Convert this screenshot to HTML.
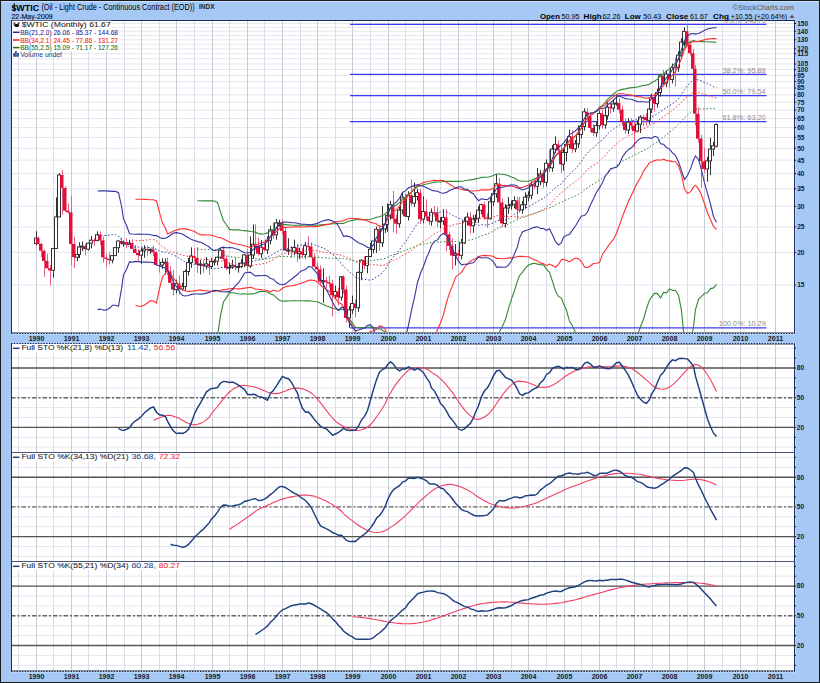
<!DOCTYPE html>
<html><head><meta charset="utf-8"><style>
html,body{margin:0;padding:0;background:#a5c8f5;}
svg{display:block;font-family:"Liberation Sans",sans-serif;}
</style></head><body>
<svg width="820" height="683" viewBox="0 0 820 683">
<rect x="0" y="0" width="820" height="683" fill="#a5c8f5"/>
<rect x="0.5" y="0.5" width="819" height="682" fill="none" stroke="#1a1a1a" stroke-width="1"/>
<line x1="1" y1="1.5" x2="819" y2="1.5" stroke="#c8e4ff" stroke-width="1"/>
<rect x="11.5" y="20.5" width="783" height="313" fill="#ffffff"/>
<rect x="11.5" y="343.5" width="783" height="109" fill="#ffffff"/>
<rect x="11.5" y="452.5" width="783" height="109" fill="#ffffff"/>
<rect x="11.5" y="561.5" width="783" height="110" fill="#ffffff"/>
<defs>
<clipPath id="c0"><rect x="12" y="21" width="782" height="312"/></clipPath>
<clipPath id="c1"><rect x="12" y="344" width="782" height="108"/></clipPath>
<clipPath id="c2"><rect x="12" y="453" width="782" height="108"/></clipPath>
<clipPath id="c3"><rect x="12" y="562" width="782" height="109"/></clipPath>
</defs>
<g clip-path="url(#c0)">
<line x1="11" y1="285.0" x2="794" y2="285.0" stroke="#e6e6ee" stroke-width="1"/>
<line x1="11" y1="252.4" x2="794" y2="252.4" stroke="#e6e6ee" stroke-width="1"/>
<line x1="11" y1="227.0" x2="794" y2="227.0" stroke="#e6e6ee" stroke-width="1"/>
<line x1="11" y1="206.3" x2="794" y2="206.3" stroke="#e6e6ee" stroke-width="1"/>
<line x1="11" y1="188.8" x2="794" y2="188.8" stroke="#e6e6ee" stroke-width="1"/>
<line x1="11" y1="173.6" x2="794" y2="173.6" stroke="#e6e6ee" stroke-width="1"/>
<line x1="11" y1="160.2" x2="794" y2="160.2" stroke="#e6e6ee" stroke-width="1"/>
<line x1="11" y1="148.3" x2="794" y2="148.3" stroke="#e6e6ee" stroke-width="1"/>
<line x1="11" y1="137.5" x2="794" y2="137.5" stroke="#e6e6ee" stroke-width="1"/>
<line x1="11" y1="127.6" x2="794" y2="127.6" stroke="#e6e6ee" stroke-width="1"/>
<line x1="11" y1="118.5" x2="794" y2="118.5" stroke="#e6e6ee" stroke-width="1"/>
<line x1="11" y1="110.1" x2="794" y2="110.1" stroke="#e6e6ee" stroke-width="1"/>
<line x1="11" y1="102.2" x2="794" y2="102.2" stroke="#e6e6ee" stroke-width="1"/>
<line x1="11" y1="94.9" x2="794" y2="94.9" stroke="#e6e6ee" stroke-width="1"/>
<line x1="11" y1="88.0" x2="794" y2="88.0" stroke="#e6e6ee" stroke-width="1"/>
<line x1="11" y1="81.5" x2="794" y2="81.5" stroke="#e6e6ee" stroke-width="1"/>
<line x1="11" y1="75.4" x2="794" y2="75.4" stroke="#e6e6ee" stroke-width="1"/>
<line x1="11" y1="69.6" x2="794" y2="69.6" stroke="#e6e6ee" stroke-width="1"/>
<line x1="11" y1="64.0" x2="794" y2="64.0" stroke="#e6e6ee" stroke-width="1"/>
<line x1="11" y1="58.7" x2="794" y2="58.7" stroke="#e6e6ee" stroke-width="1"/>
<line x1="11" y1="53.7" x2="794" y2="53.7" stroke="#e6e6ee" stroke-width="1"/>
<line x1="11" y1="48.8" x2="794" y2="48.8" stroke="#e6e6ee" stroke-width="1"/>
<line x1="11" y1="44.2" x2="794" y2="44.2" stroke="#e6e6ee" stroke-width="1"/>
<line x1="11" y1="39.8" x2="794" y2="39.8" stroke="#e6e6ee" stroke-width="1"/>
<line x1="11" y1="35.5" x2="794" y2="35.5" stroke="#e6e6ee" stroke-width="1"/>
<line x1="11" y1="31.3" x2="794" y2="31.3" stroke="#e6e6ee" stroke-width="1"/>
<line x1="11" y1="27.4" x2="794" y2="27.4" stroke="#e6e6ee" stroke-width="1"/>
<line x1="11" y1="23.5" x2="794" y2="23.5" stroke="#e6e6ee" stroke-width="1"/>
<line x1="18.5" y1="21" x2="18.5" y2="333" stroke="#dcdcea" stroke-width="1"/>
<line x1="36.5" y1="21" x2="36.5" y2="333" stroke="#c8ccd6" stroke-width="1"/>
<line x1="53.5" y1="21" x2="53.5" y2="333" stroke="#dcdcea" stroke-width="1"/>
<line x1="71.5" y1="21" x2="71.5" y2="333" stroke="#c8ccd6" stroke-width="1"/>
<line x1="88.5" y1="21" x2="88.5" y2="333" stroke="#dcdcea" stroke-width="1"/>
<line x1="106.5" y1="21" x2="106.5" y2="333" stroke="#c8ccd6" stroke-width="1"/>
<line x1="124.5" y1="21" x2="124.5" y2="333" stroke="#dcdcea" stroke-width="1"/>
<line x1="141.5" y1="21" x2="141.5" y2="333" stroke="#c8ccd6" stroke-width="1"/>
<line x1="159.5" y1="21" x2="159.5" y2="333" stroke="#dcdcea" stroke-width="1"/>
<line x1="176.5" y1="21" x2="176.5" y2="333" stroke="#c8ccd6" stroke-width="1"/>
<line x1="194.5" y1="21" x2="194.5" y2="333" stroke="#dcdcea" stroke-width="1"/>
<line x1="212.5" y1="21" x2="212.5" y2="333" stroke="#c8ccd6" stroke-width="1"/>
<line x1="229.5" y1="21" x2="229.5" y2="333" stroke="#dcdcea" stroke-width="1"/>
<line x1="247.5" y1="21" x2="247.5" y2="333" stroke="#c8ccd6" stroke-width="1"/>
<line x1="264.5" y1="21" x2="264.5" y2="333" stroke="#dcdcea" stroke-width="1"/>
<line x1="282.5" y1="21" x2="282.5" y2="333" stroke="#c8ccd6" stroke-width="1"/>
<line x1="300.5" y1="21" x2="300.5" y2="333" stroke="#dcdcea" stroke-width="1"/>
<line x1="317.5" y1="21" x2="317.5" y2="333" stroke="#c8ccd6" stroke-width="1"/>
<line x1="335.5" y1="21" x2="335.5" y2="333" stroke="#dcdcea" stroke-width="1"/>
<line x1="352.5" y1="21" x2="352.5" y2="333" stroke="#c8ccd6" stroke-width="1"/>
<line x1="370.5" y1="21" x2="370.5" y2="333" stroke="#dcdcea" stroke-width="1"/>
<line x1="388.5" y1="21" x2="388.5" y2="333" stroke="#c8ccd6" stroke-width="1"/>
<line x1="405.5" y1="21" x2="405.5" y2="333" stroke="#dcdcea" stroke-width="1"/>
<line x1="423.5" y1="21" x2="423.5" y2="333" stroke="#c8ccd6" stroke-width="1"/>
<line x1="440.5" y1="21" x2="440.5" y2="333" stroke="#dcdcea" stroke-width="1"/>
<line x1="458.5" y1="21" x2="458.5" y2="333" stroke="#c8ccd6" stroke-width="1"/>
<line x1="476.5" y1="21" x2="476.5" y2="333" stroke="#dcdcea" stroke-width="1"/>
<line x1="493.5" y1="21" x2="493.5" y2="333" stroke="#c8ccd6" stroke-width="1"/>
<line x1="511.5" y1="21" x2="511.5" y2="333" stroke="#dcdcea" stroke-width="1"/>
<line x1="528.5" y1="21" x2="528.5" y2="333" stroke="#c8ccd6" stroke-width="1"/>
<line x1="546.5" y1="21" x2="546.5" y2="333" stroke="#dcdcea" stroke-width="1"/>
<line x1="564.5" y1="21" x2="564.5" y2="333" stroke="#c8ccd6" stroke-width="1"/>
<line x1="581.5" y1="21" x2="581.5" y2="333" stroke="#dcdcea" stroke-width="1"/>
<line x1="599.5" y1="21" x2="599.5" y2="333" stroke="#c8ccd6" stroke-width="1"/>
<line x1="616.5" y1="21" x2="616.5" y2="333" stroke="#dcdcea" stroke-width="1"/>
<line x1="634.5" y1="21" x2="634.5" y2="333" stroke="#c8ccd6" stroke-width="1"/>
<line x1="652.5" y1="21" x2="652.5" y2="333" stroke="#dcdcea" stroke-width="1"/>
<line x1="669.5" y1="21" x2="669.5" y2="333" stroke="#c8ccd6" stroke-width="1"/>
<line x1="687.5" y1="21" x2="687.5" y2="333" stroke="#dcdcea" stroke-width="1"/>
<line x1="704.5" y1="21" x2="704.5" y2="333" stroke="#c8ccd6" stroke-width="1"/>
<line x1="722.5" y1="21" x2="722.5" y2="333" stroke="#dcdcea" stroke-width="1"/>
<line x1="740.5" y1="21" x2="740.5" y2="333" stroke="#c8ccd6" stroke-width="1"/>
<line x1="757.5" y1="21" x2="757.5" y2="333" stroke="#dcdcea" stroke-width="1"/>
<line x1="775.5" y1="21" x2="775.5" y2="333" stroke="#c8ccd6" stroke-width="1"/>
</g>
<g clip-path="url(#c1)">
<line x1="11" y1="447.2" x2="794" y2="447.2" stroke="#e6e6ee" stroke-width="1"/>
<line x1="11" y1="437.3" x2="794" y2="437.3" stroke="#e6e6ee" stroke-width="1"/>
<line x1="11" y1="427.4" x2="794" y2="427.4" stroke="#e6e6ee" stroke-width="1"/>
<line x1="11" y1="417.5" x2="794" y2="417.5" stroke="#e6e6ee" stroke-width="1"/>
<line x1="11" y1="407.6" x2="794" y2="407.6" stroke="#e6e6ee" stroke-width="1"/>
<line x1="11" y1="397.7" x2="794" y2="397.7" stroke="#e6e6ee" stroke-width="1"/>
<line x1="11" y1="387.8" x2="794" y2="387.8" stroke="#e6e6ee" stroke-width="1"/>
<line x1="11" y1="377.9" x2="794" y2="377.9" stroke="#e6e6ee" stroke-width="1"/>
<line x1="11" y1="368.0" x2="794" y2="368.0" stroke="#e6e6ee" stroke-width="1"/>
<line x1="11" y1="358.1" x2="794" y2="358.1" stroke="#e6e6ee" stroke-width="1"/>
<line x1="11" y1="348.2" x2="794" y2="348.2" stroke="#e6e6ee" stroke-width="1"/>
<line x1="18.5" y1="344" x2="18.5" y2="452" stroke="#dcdcea" stroke-width="1"/>
<line x1="36.5" y1="344" x2="36.5" y2="452" stroke="#c8ccd6" stroke-width="1"/>
<line x1="53.5" y1="344" x2="53.5" y2="452" stroke="#dcdcea" stroke-width="1"/>
<line x1="71.5" y1="344" x2="71.5" y2="452" stroke="#c8ccd6" stroke-width="1"/>
<line x1="88.5" y1="344" x2="88.5" y2="452" stroke="#dcdcea" stroke-width="1"/>
<line x1="106.5" y1="344" x2="106.5" y2="452" stroke="#c8ccd6" stroke-width="1"/>
<line x1="124.5" y1="344" x2="124.5" y2="452" stroke="#dcdcea" stroke-width="1"/>
<line x1="141.5" y1="344" x2="141.5" y2="452" stroke="#c8ccd6" stroke-width="1"/>
<line x1="159.5" y1="344" x2="159.5" y2="452" stroke="#dcdcea" stroke-width="1"/>
<line x1="176.5" y1="344" x2="176.5" y2="452" stroke="#c8ccd6" stroke-width="1"/>
<line x1="194.5" y1="344" x2="194.5" y2="452" stroke="#dcdcea" stroke-width="1"/>
<line x1="212.5" y1="344" x2="212.5" y2="452" stroke="#c8ccd6" stroke-width="1"/>
<line x1="229.5" y1="344" x2="229.5" y2="452" stroke="#dcdcea" stroke-width="1"/>
<line x1="247.5" y1="344" x2="247.5" y2="452" stroke="#c8ccd6" stroke-width="1"/>
<line x1="264.5" y1="344" x2="264.5" y2="452" stroke="#dcdcea" stroke-width="1"/>
<line x1="282.5" y1="344" x2="282.5" y2="452" stroke="#c8ccd6" stroke-width="1"/>
<line x1="300.5" y1="344" x2="300.5" y2="452" stroke="#dcdcea" stroke-width="1"/>
<line x1="317.5" y1="344" x2="317.5" y2="452" stroke="#c8ccd6" stroke-width="1"/>
<line x1="335.5" y1="344" x2="335.5" y2="452" stroke="#dcdcea" stroke-width="1"/>
<line x1="352.5" y1="344" x2="352.5" y2="452" stroke="#c8ccd6" stroke-width="1"/>
<line x1="370.5" y1="344" x2="370.5" y2="452" stroke="#dcdcea" stroke-width="1"/>
<line x1="388.5" y1="344" x2="388.5" y2="452" stroke="#c8ccd6" stroke-width="1"/>
<line x1="405.5" y1="344" x2="405.5" y2="452" stroke="#dcdcea" stroke-width="1"/>
<line x1="423.5" y1="344" x2="423.5" y2="452" stroke="#c8ccd6" stroke-width="1"/>
<line x1="440.5" y1="344" x2="440.5" y2="452" stroke="#dcdcea" stroke-width="1"/>
<line x1="458.5" y1="344" x2="458.5" y2="452" stroke="#c8ccd6" stroke-width="1"/>
<line x1="476.5" y1="344" x2="476.5" y2="452" stroke="#dcdcea" stroke-width="1"/>
<line x1="493.5" y1="344" x2="493.5" y2="452" stroke="#c8ccd6" stroke-width="1"/>
<line x1="511.5" y1="344" x2="511.5" y2="452" stroke="#dcdcea" stroke-width="1"/>
<line x1="528.5" y1="344" x2="528.5" y2="452" stroke="#c8ccd6" stroke-width="1"/>
<line x1="546.5" y1="344" x2="546.5" y2="452" stroke="#dcdcea" stroke-width="1"/>
<line x1="564.5" y1="344" x2="564.5" y2="452" stroke="#c8ccd6" stroke-width="1"/>
<line x1="581.5" y1="344" x2="581.5" y2="452" stroke="#dcdcea" stroke-width="1"/>
<line x1="599.5" y1="344" x2="599.5" y2="452" stroke="#c8ccd6" stroke-width="1"/>
<line x1="616.5" y1="344" x2="616.5" y2="452" stroke="#dcdcea" stroke-width="1"/>
<line x1="634.5" y1="344" x2="634.5" y2="452" stroke="#c8ccd6" stroke-width="1"/>
<line x1="652.5" y1="344" x2="652.5" y2="452" stroke="#dcdcea" stroke-width="1"/>
<line x1="669.5" y1="344" x2="669.5" y2="452" stroke="#c8ccd6" stroke-width="1"/>
<line x1="687.5" y1="344" x2="687.5" y2="452" stroke="#dcdcea" stroke-width="1"/>
<line x1="704.5" y1="344" x2="704.5" y2="452" stroke="#c8ccd6" stroke-width="1"/>
<line x1="722.5" y1="344" x2="722.5" y2="452" stroke="#dcdcea" stroke-width="1"/>
<line x1="740.5" y1="344" x2="740.5" y2="452" stroke="#c8ccd6" stroke-width="1"/>
<line x1="757.5" y1="344" x2="757.5" y2="452" stroke="#dcdcea" stroke-width="1"/>
<line x1="775.5" y1="344" x2="775.5" y2="452" stroke="#c8ccd6" stroke-width="1"/>
</g>
<g clip-path="url(#c2)">
<line x1="11" y1="556.4" x2="794" y2="556.4" stroke="#e6e6ee" stroke-width="1"/>
<line x1="11" y1="546.5" x2="794" y2="546.5" stroke="#e6e6ee" stroke-width="1"/>
<line x1="11" y1="536.6" x2="794" y2="536.6" stroke="#e6e6ee" stroke-width="1"/>
<line x1="11" y1="526.7" x2="794" y2="526.7" stroke="#e6e6ee" stroke-width="1"/>
<line x1="11" y1="516.8" x2="794" y2="516.8" stroke="#e6e6ee" stroke-width="1"/>
<line x1="11" y1="506.9" x2="794" y2="506.9" stroke="#e6e6ee" stroke-width="1"/>
<line x1="11" y1="497.0" x2="794" y2="497.0" stroke="#e6e6ee" stroke-width="1"/>
<line x1="11" y1="487.1" x2="794" y2="487.1" stroke="#e6e6ee" stroke-width="1"/>
<line x1="11" y1="477.2" x2="794" y2="477.2" stroke="#e6e6ee" stroke-width="1"/>
<line x1="11" y1="467.3" x2="794" y2="467.3" stroke="#e6e6ee" stroke-width="1"/>
<line x1="11" y1="457.4" x2="794" y2="457.4" stroke="#e6e6ee" stroke-width="1"/>
<line x1="18.5" y1="453" x2="18.5" y2="561" stroke="#dcdcea" stroke-width="1"/>
<line x1="36.5" y1="453" x2="36.5" y2="561" stroke="#c8ccd6" stroke-width="1"/>
<line x1="53.5" y1="453" x2="53.5" y2="561" stroke="#dcdcea" stroke-width="1"/>
<line x1="71.5" y1="453" x2="71.5" y2="561" stroke="#c8ccd6" stroke-width="1"/>
<line x1="88.5" y1="453" x2="88.5" y2="561" stroke="#dcdcea" stroke-width="1"/>
<line x1="106.5" y1="453" x2="106.5" y2="561" stroke="#c8ccd6" stroke-width="1"/>
<line x1="124.5" y1="453" x2="124.5" y2="561" stroke="#dcdcea" stroke-width="1"/>
<line x1="141.5" y1="453" x2="141.5" y2="561" stroke="#c8ccd6" stroke-width="1"/>
<line x1="159.5" y1="453" x2="159.5" y2="561" stroke="#dcdcea" stroke-width="1"/>
<line x1="176.5" y1="453" x2="176.5" y2="561" stroke="#c8ccd6" stroke-width="1"/>
<line x1="194.5" y1="453" x2="194.5" y2="561" stroke="#dcdcea" stroke-width="1"/>
<line x1="212.5" y1="453" x2="212.5" y2="561" stroke="#c8ccd6" stroke-width="1"/>
<line x1="229.5" y1="453" x2="229.5" y2="561" stroke="#dcdcea" stroke-width="1"/>
<line x1="247.5" y1="453" x2="247.5" y2="561" stroke="#c8ccd6" stroke-width="1"/>
<line x1="264.5" y1="453" x2="264.5" y2="561" stroke="#dcdcea" stroke-width="1"/>
<line x1="282.5" y1="453" x2="282.5" y2="561" stroke="#c8ccd6" stroke-width="1"/>
<line x1="300.5" y1="453" x2="300.5" y2="561" stroke="#dcdcea" stroke-width="1"/>
<line x1="317.5" y1="453" x2="317.5" y2="561" stroke="#c8ccd6" stroke-width="1"/>
<line x1="335.5" y1="453" x2="335.5" y2="561" stroke="#dcdcea" stroke-width="1"/>
<line x1="352.5" y1="453" x2="352.5" y2="561" stroke="#c8ccd6" stroke-width="1"/>
<line x1="370.5" y1="453" x2="370.5" y2="561" stroke="#dcdcea" stroke-width="1"/>
<line x1="388.5" y1="453" x2="388.5" y2="561" stroke="#c8ccd6" stroke-width="1"/>
<line x1="405.5" y1="453" x2="405.5" y2="561" stroke="#dcdcea" stroke-width="1"/>
<line x1="423.5" y1="453" x2="423.5" y2="561" stroke="#c8ccd6" stroke-width="1"/>
<line x1="440.5" y1="453" x2="440.5" y2="561" stroke="#dcdcea" stroke-width="1"/>
<line x1="458.5" y1="453" x2="458.5" y2="561" stroke="#c8ccd6" stroke-width="1"/>
<line x1="476.5" y1="453" x2="476.5" y2="561" stroke="#dcdcea" stroke-width="1"/>
<line x1="493.5" y1="453" x2="493.5" y2="561" stroke="#c8ccd6" stroke-width="1"/>
<line x1="511.5" y1="453" x2="511.5" y2="561" stroke="#dcdcea" stroke-width="1"/>
<line x1="528.5" y1="453" x2="528.5" y2="561" stroke="#c8ccd6" stroke-width="1"/>
<line x1="546.5" y1="453" x2="546.5" y2="561" stroke="#dcdcea" stroke-width="1"/>
<line x1="564.5" y1="453" x2="564.5" y2="561" stroke="#c8ccd6" stroke-width="1"/>
<line x1="581.5" y1="453" x2="581.5" y2="561" stroke="#dcdcea" stroke-width="1"/>
<line x1="599.5" y1="453" x2="599.5" y2="561" stroke="#c8ccd6" stroke-width="1"/>
<line x1="616.5" y1="453" x2="616.5" y2="561" stroke="#dcdcea" stroke-width="1"/>
<line x1="634.5" y1="453" x2="634.5" y2="561" stroke="#c8ccd6" stroke-width="1"/>
<line x1="652.5" y1="453" x2="652.5" y2="561" stroke="#dcdcea" stroke-width="1"/>
<line x1="669.5" y1="453" x2="669.5" y2="561" stroke="#c8ccd6" stroke-width="1"/>
<line x1="687.5" y1="453" x2="687.5" y2="561" stroke="#dcdcea" stroke-width="1"/>
<line x1="704.5" y1="453" x2="704.5" y2="561" stroke="#c8ccd6" stroke-width="1"/>
<line x1="722.5" y1="453" x2="722.5" y2="561" stroke="#dcdcea" stroke-width="1"/>
<line x1="740.5" y1="453" x2="740.5" y2="561" stroke="#c8ccd6" stroke-width="1"/>
<line x1="757.5" y1="453" x2="757.5" y2="561" stroke="#dcdcea" stroke-width="1"/>
<line x1="775.5" y1="453" x2="775.5" y2="561" stroke="#c8ccd6" stroke-width="1"/>
</g>
<g clip-path="url(#c3)">
<line x1="11" y1="665.3" x2="794" y2="665.3" stroke="#e6e6ee" stroke-width="1"/>
<line x1="11" y1="655.4" x2="794" y2="655.4" stroke="#e6e6ee" stroke-width="1"/>
<line x1="11" y1="645.5" x2="794" y2="645.5" stroke="#e6e6ee" stroke-width="1"/>
<line x1="11" y1="635.6" x2="794" y2="635.6" stroke="#e6e6ee" stroke-width="1"/>
<line x1="11" y1="625.7" x2="794" y2="625.7" stroke="#e6e6ee" stroke-width="1"/>
<line x1="11" y1="615.8" x2="794" y2="615.8" stroke="#e6e6ee" stroke-width="1"/>
<line x1="11" y1="605.9" x2="794" y2="605.9" stroke="#e6e6ee" stroke-width="1"/>
<line x1="11" y1="596.0" x2="794" y2="596.0" stroke="#e6e6ee" stroke-width="1"/>
<line x1="11" y1="586.1" x2="794" y2="586.1" stroke="#e6e6ee" stroke-width="1"/>
<line x1="11" y1="576.2" x2="794" y2="576.2" stroke="#e6e6ee" stroke-width="1"/>
<line x1="11" y1="566.3" x2="794" y2="566.3" stroke="#e6e6ee" stroke-width="1"/>
<line x1="18.5" y1="562" x2="18.5" y2="671" stroke="#dcdcea" stroke-width="1"/>
<line x1="36.5" y1="562" x2="36.5" y2="671" stroke="#c8ccd6" stroke-width="1"/>
<line x1="53.5" y1="562" x2="53.5" y2="671" stroke="#dcdcea" stroke-width="1"/>
<line x1="71.5" y1="562" x2="71.5" y2="671" stroke="#c8ccd6" stroke-width="1"/>
<line x1="88.5" y1="562" x2="88.5" y2="671" stroke="#dcdcea" stroke-width="1"/>
<line x1="106.5" y1="562" x2="106.5" y2="671" stroke="#c8ccd6" stroke-width="1"/>
<line x1="124.5" y1="562" x2="124.5" y2="671" stroke="#dcdcea" stroke-width="1"/>
<line x1="141.5" y1="562" x2="141.5" y2="671" stroke="#c8ccd6" stroke-width="1"/>
<line x1="159.5" y1="562" x2="159.5" y2="671" stroke="#dcdcea" stroke-width="1"/>
<line x1="176.5" y1="562" x2="176.5" y2="671" stroke="#c8ccd6" stroke-width="1"/>
<line x1="194.5" y1="562" x2="194.5" y2="671" stroke="#dcdcea" stroke-width="1"/>
<line x1="212.5" y1="562" x2="212.5" y2="671" stroke="#c8ccd6" stroke-width="1"/>
<line x1="229.5" y1="562" x2="229.5" y2="671" stroke="#dcdcea" stroke-width="1"/>
<line x1="247.5" y1="562" x2="247.5" y2="671" stroke="#c8ccd6" stroke-width="1"/>
<line x1="264.5" y1="562" x2="264.5" y2="671" stroke="#dcdcea" stroke-width="1"/>
<line x1="282.5" y1="562" x2="282.5" y2="671" stroke="#c8ccd6" stroke-width="1"/>
<line x1="300.5" y1="562" x2="300.5" y2="671" stroke="#dcdcea" stroke-width="1"/>
<line x1="317.5" y1="562" x2="317.5" y2="671" stroke="#c8ccd6" stroke-width="1"/>
<line x1="335.5" y1="562" x2="335.5" y2="671" stroke="#dcdcea" stroke-width="1"/>
<line x1="352.5" y1="562" x2="352.5" y2="671" stroke="#c8ccd6" stroke-width="1"/>
<line x1="370.5" y1="562" x2="370.5" y2="671" stroke="#dcdcea" stroke-width="1"/>
<line x1="388.5" y1="562" x2="388.5" y2="671" stroke="#c8ccd6" stroke-width="1"/>
<line x1="405.5" y1="562" x2="405.5" y2="671" stroke="#dcdcea" stroke-width="1"/>
<line x1="423.5" y1="562" x2="423.5" y2="671" stroke="#c8ccd6" stroke-width="1"/>
<line x1="440.5" y1="562" x2="440.5" y2="671" stroke="#dcdcea" stroke-width="1"/>
<line x1="458.5" y1="562" x2="458.5" y2="671" stroke="#c8ccd6" stroke-width="1"/>
<line x1="476.5" y1="562" x2="476.5" y2="671" stroke="#dcdcea" stroke-width="1"/>
<line x1="493.5" y1="562" x2="493.5" y2="671" stroke="#c8ccd6" stroke-width="1"/>
<line x1="511.5" y1="562" x2="511.5" y2="671" stroke="#dcdcea" stroke-width="1"/>
<line x1="528.5" y1="562" x2="528.5" y2="671" stroke="#c8ccd6" stroke-width="1"/>
<line x1="546.5" y1="562" x2="546.5" y2="671" stroke="#dcdcea" stroke-width="1"/>
<line x1="564.5" y1="562" x2="564.5" y2="671" stroke="#c8ccd6" stroke-width="1"/>
<line x1="581.5" y1="562" x2="581.5" y2="671" stroke="#dcdcea" stroke-width="1"/>
<line x1="599.5" y1="562" x2="599.5" y2="671" stroke="#c8ccd6" stroke-width="1"/>
<line x1="616.5" y1="562" x2="616.5" y2="671" stroke="#dcdcea" stroke-width="1"/>
<line x1="634.5" y1="562" x2="634.5" y2="671" stroke="#c8ccd6" stroke-width="1"/>
<line x1="652.5" y1="562" x2="652.5" y2="671" stroke="#dcdcea" stroke-width="1"/>
<line x1="669.5" y1="562" x2="669.5" y2="671" stroke="#c8ccd6" stroke-width="1"/>
<line x1="687.5" y1="562" x2="687.5" y2="671" stroke="#dcdcea" stroke-width="1"/>
<line x1="704.5" y1="562" x2="704.5" y2="671" stroke="#c8ccd6" stroke-width="1"/>
<line x1="722.5" y1="562" x2="722.5" y2="671" stroke="#dcdcea" stroke-width="1"/>
<line x1="740.5" y1="562" x2="740.5" y2="671" stroke="#c8ccd6" stroke-width="1"/>
<line x1="757.5" y1="562" x2="757.5" y2="671" stroke="#dcdcea" stroke-width="1"/>
<line x1="775.5" y1="562" x2="775.5" y2="671" stroke="#c8ccd6" stroke-width="1"/>
</g>
<g clip-path="url(#c0)">
<line x1="350" y1="24.4" x2="766.5" y2="24.4" stroke="#3b3bf0" stroke-width="1.3"/>
<line x1="350" y1="74.3" x2="766.5" y2="74.3" stroke="#3b3bf0" stroke-width="1.3"/>
<line x1="350" y1="95.6" x2="766.5" y2="95.6" stroke="#3b3bf0" stroke-width="1.3"/>
<line x1="350" y1="121.7" x2="766.5" y2="121.7" stroke="#3b3bf0" stroke-width="1.3"/>
<line x1="350" y1="327.8" x2="766.5" y2="327.8" stroke="#3b3bf0" stroke-width="1.3"/>
<line x1="36.50" y1="231.2" x2="36.50" y2="245.5" stroke="#333" stroke-width="1"/>
<rect x="34.50" y="238.1" width="3" height="5.5" fill="#fff" stroke="#333" stroke-width="1"/>
<line x1="38.50" y1="236.4" x2="38.50" y2="244.0" stroke="#e86080" stroke-width="1"/>
<rect x="36.00" y="238.1" width="3.5" height="5.9" fill="#e0103a"/>
<line x1="41.50" y1="242.6" x2="41.50" y2="257.4" stroke="#e86080" stroke-width="1"/>
<rect x="39.00" y="243.9" width="3.5" height="6.8" fill="#e0103a"/>
<line x1="44.50" y1="249.3" x2="44.50" y2="276.9" stroke="#e86080" stroke-width="1"/>
<rect x="42.00" y="250.8" width="3.5" height="10.2" fill="#e0103a"/>
<line x1="47.50" y1="253.6" x2="47.50" y2="268.3" stroke="#e86080" stroke-width="1"/>
<rect x="45.00" y="261.0" width="3.5" height="7.2" fill="#e0103a"/>
<line x1="50.50" y1="265.0" x2="50.50" y2="285.5" stroke="#e86080" stroke-width="1"/>
<rect x="48.00" y="268.2" width="3.5" height="2.2" fill="#e0103a"/>
<line x1="53.50" y1="247.9" x2="53.50" y2="277.4" stroke="#333" stroke-width="1"/>
<rect x="51.50" y="248.5" width="3" height="21.8" fill="#fff" stroke="#333" stroke-width="1"/>
<line x1="56.50" y1="197.4" x2="56.50" y2="248.5" stroke="#333" stroke-width="1"/>
<rect x="54.50" y="216.9" width="3" height="31.6" fill="#fff" stroke="#333" stroke-width="1"/>
<line x1="59.50" y1="173.2" x2="59.50" y2="216.9" stroke="#333" stroke-width="1"/>
<rect x="57.50" y="175.0" width="3" height="41.9" fill="#fff" stroke="#333" stroke-width="1"/>
<line x1="62.50" y1="170.1" x2="62.50" y2="214.9" stroke="#e86080" stroke-width="1"/>
<rect x="60.00" y="175.0" width="3.5" height="13.0" fill="#e0103a"/>
<line x1="65.50" y1="186.0" x2="65.50" y2="211.9" stroke="#e86080" stroke-width="1"/>
<rect x="63.00" y="188.0" width="3.5" height="22.7" fill="#e0103a"/>
<line x1="68.50" y1="203.2" x2="68.50" y2="213.7" stroke="#e86080" stroke-width="1"/>
<rect x="66.00" y="210.7" width="3.5" height="1.6" fill="#e0103a"/>
<line x1="71.50" y1="195.6" x2="71.50" y2="265.3" stroke="#e86080" stroke-width="1"/>
<rect x="69.00" y="212.4" width="3.5" height="31.6" fill="#e0103a"/>
<line x1="74.50" y1="236.6" x2="74.50" y2="268.2" stroke="#e86080" stroke-width="1"/>
<rect x="72.00" y="243.9" width="3.5" height="13.3" fill="#e0103a"/>
<line x1="77.50" y1="247.7" x2="77.50" y2="261.2" stroke="#333" stroke-width="1"/>
<rect x="75.50" y="254.5" width="3" height="2.8" fill="#fff" stroke="#333" stroke-width="1"/>
<line x1="79.50" y1="242.2" x2="79.50" y2="258.1" stroke="#333" stroke-width="1"/>
<rect x="77.50" y="247.0" width="3" height="7.4" fill="#fff" stroke="#333" stroke-width="1"/>
<line x1="82.50" y1="241.4" x2="82.50" y2="251.1" stroke="#333" stroke-width="1"/>
<rect x="80.50" y="246.1" width="3" height="1.0" fill="#fff" stroke="#333" stroke-width="1"/>
<line x1="85.50" y1="244.0" x2="85.50" y2="255.4" stroke="#e86080" stroke-width="1"/>
<rect x="83.00" y="246.1" width="3.5" height="3.1" fill="#e0103a"/>
<line x1="88.50" y1="243.1" x2="88.50" y2="250.6" stroke="#333" stroke-width="1"/>
<rect x="86.50" y="243.2" width="3" height="6.0" fill="#fff" stroke="#333" stroke-width="1"/>
<line x1="91.50" y1="236.1" x2="91.50" y2="248.3" stroke="#333" stroke-width="1"/>
<rect x="89.50" y="240.2" width="3" height="3.0" fill="#fff" stroke="#333" stroke-width="1"/>
<line x1="94.50" y1="238.3" x2="94.50" y2="245.8" stroke="#e86080" stroke-width="1"/>
<rect x="92.00" y="240.2" width="3.5" height="1.0" fill="#e0103a"/>
<line x1="97.50" y1="231.3" x2="97.50" y2="241.4" stroke="#333" stroke-width="1"/>
<rect x="95.50" y="234.7" width="3" height="5.7" fill="#fff" stroke="#333" stroke-width="1"/>
<line x1="100.50" y1="231.3" x2="100.50" y2="245.3" stroke="#e86080" stroke-width="1"/>
<rect x="98.00" y="234.7" width="3.5" height="5.8" fill="#e0103a"/>
<line x1="103.50" y1="236.5" x2="103.50" y2="262.9" stroke="#e86080" stroke-width="1"/>
<rect x="101.00" y="240.4" width="3.5" height="17.0" fill="#e0103a"/>
<line x1="106.50" y1="253.7" x2="106.50" y2="266.8" stroke="#e86080" stroke-width="1"/>
<rect x="104.00" y="257.5" width="3.5" height="1.3" fill="#e0103a"/>
<line x1="109.50" y1="252.3" x2="109.50" y2="264.6" stroke="#e86080" stroke-width="1"/>
<rect x="107.00" y="258.8" width="3.5" height="1.3" fill="#e0103a"/>
<line x1="112.50" y1="255.0" x2="112.50" y2="263.3" stroke="#333" stroke-width="1"/>
<rect x="110.50" y="255.6" width="3" height="4.5" fill="#fff" stroke="#333" stroke-width="1"/>
<line x1="115.50" y1="247.5" x2="115.50" y2="255.6" stroke="#333" stroke-width="1"/>
<rect x="113.50" y="247.6" width="3" height="8.0" fill="#fff" stroke="#333" stroke-width="1"/>
<line x1="118.50" y1="240.5" x2="118.50" y2="252.8" stroke="#333" stroke-width="1"/>
<rect x="116.50" y="241.0" width="3" height="6.7" fill="#fff" stroke="#333" stroke-width="1"/>
<line x1="121.50" y1="237.4" x2="121.50" y2="244.4" stroke="#e86080" stroke-width="1"/>
<rect x="119.00" y="241.0" width="3.5" height="2.7" fill="#e0103a"/>
<line x1="123.50" y1="240.5" x2="123.50" y2="246.6" stroke="#333" stroke-width="1"/>
<rect x="121.50" y="242.2" width="3" height="1.4" fill="#fff" stroke="#333" stroke-width="1"/>
<line x1="126.50" y1="238.3" x2="126.50" y2="248.4" stroke="#e86080" stroke-width="1"/>
<rect x="124.00" y="242.2" width="3.5" height="2.0" fill="#e0103a"/>
<line x1="129.50" y1="239.8" x2="129.50" y2="244.9" stroke="#333" stroke-width="1"/>
<rect x="127.50" y="243.0" width="3" height="1.2" fill="#fff" stroke="#333" stroke-width="1"/>
<line x1="132.50" y1="239.3" x2="132.50" y2="249.0" stroke="#e86080" stroke-width="1"/>
<rect x="130.00" y="243.0" width="3.5" height="5.9" fill="#e0103a"/>
<line x1="135.50" y1="245.0" x2="135.50" y2="253.1" stroke="#e86080" stroke-width="1"/>
<rect x="133.00" y="248.9" width="3.5" height="4.1" fill="#e0103a"/>
<line x1="138.50" y1="249.1" x2="138.50" y2="260.8" stroke="#e86080" stroke-width="1"/>
<rect x="136.00" y="253.0" width="3.5" height="2.2" fill="#e0103a"/>
<line x1="141.50" y1="248.0" x2="141.50" y2="263.9" stroke="#333" stroke-width="1"/>
<rect x="139.50" y="250.9" width="3" height="4.3" fill="#fff" stroke="#333" stroke-width="1"/>
<line x1="144.50" y1="245.1" x2="144.50" y2="257.7" stroke="#333" stroke-width="1"/>
<rect x="142.50" y="249.0" width="3" height="1.9" fill="#fff" stroke="#333" stroke-width="1"/>
<line x1="147.50" y1="245.9" x2="147.50" y2="255.7" stroke="#e86080" stroke-width="1"/>
<rect x="145.00" y="249.0" width="3.5" height="1.0" fill="#e0103a"/>
<line x1="150.50" y1="248.5" x2="150.50" y2="253.9" stroke="#333" stroke-width="1"/>
<rect x="148.50" y="249.4" width="3" height="1.0" fill="#fff" stroke="#333" stroke-width="1"/>
<line x1="153.50" y1="245.5" x2="153.50" y2="256.3" stroke="#e86080" stroke-width="1"/>
<rect x="151.00" y="249.4" width="3.5" height="2.9" fill="#e0103a"/>
<line x1="156.50" y1="251.0" x2="156.50" y2="265.0" stroke="#e86080" stroke-width="1"/>
<rect x="154.00" y="252.2" width="3.5" height="12.7" fill="#e0103a"/>
<line x1="159.50" y1="258.7" x2="159.50" y2="272.6" stroke="#e86080" stroke-width="1"/>
<rect x="157.00" y="265.0" width="3.5" height="1.0" fill="#e0103a"/>
<line x1="162.50" y1="258.2" x2="162.50" y2="269.0" stroke="#333" stroke-width="1"/>
<rect x="160.50" y="262.4" width="3" height="2.6" fill="#fff" stroke="#333" stroke-width="1"/>
<line x1="165.50" y1="258.3" x2="165.50" y2="274.6" stroke="#333" stroke-width="1"/>
<rect x="163.50" y="262.2" width="3" height="1.0" fill="#fff" stroke="#333" stroke-width="1"/>
<line x1="167.50" y1="257.7" x2="167.50" y2="275.4" stroke="#e86080" stroke-width="1"/>
<rect x="165.00" y="262.2" width="3.5" height="9.2" fill="#e0103a"/>
<line x1="170.50" y1="265.9" x2="170.50" y2="283.3" stroke="#e86080" stroke-width="1"/>
<rect x="168.00" y="271.3" width="3.5" height="11.4" fill="#e0103a"/>
<line x1="173.50" y1="269.8" x2="173.50" y2="295.5" stroke="#e86080" stroke-width="1"/>
<rect x="171.00" y="282.8" width="3.5" height="6.8" fill="#e0103a"/>
<line x1="176.50" y1="279.7" x2="176.50" y2="293.6" stroke="#333" stroke-width="1"/>
<rect x="174.50" y="283.6" width="3" height="6.0" fill="#fff" stroke="#333" stroke-width="1"/>
<line x1="179.50" y1="275.5" x2="179.50" y2="294.4" stroke="#e86080" stroke-width="1"/>
<rect x="177.00" y="283.6" width="3.5" height="5.4" fill="#e0103a"/>
<line x1="182.50" y1="282.7" x2="182.50" y2="290.9" stroke="#333" stroke-width="1"/>
<rect x="180.50" y="286.6" width="3" height="2.4" fill="#fff" stroke="#333" stroke-width="1"/>
<line x1="185.50" y1="269.8" x2="185.50" y2="290.7" stroke="#333" stroke-width="1"/>
<rect x="183.50" y="271.5" width="3" height="15.1" fill="#fff" stroke="#333" stroke-width="1"/>
<line x1="188.50" y1="258.0" x2="188.50" y2="275.5" stroke="#333" stroke-width="1"/>
<rect x="186.50" y="262.4" width="3" height="9.1" fill="#fff" stroke="#333" stroke-width="1"/>
<line x1="191.50" y1="247.3" x2="191.50" y2="267.8" stroke="#333" stroke-width="1"/>
<rect x="189.50" y="256.0" width="3" height="6.4" fill="#fff" stroke="#333" stroke-width="1"/>
<line x1="194.50" y1="247.8" x2="194.50" y2="261.9" stroke="#e86080" stroke-width="1"/>
<rect x="192.00" y="256.0" width="3.5" height="1.8" fill="#e0103a"/>
<line x1="197.50" y1="247.3" x2="197.50" y2="272.9" stroke="#e86080" stroke-width="1"/>
<rect x="195.00" y="257.8" width="3.5" height="6.9" fill="#e0103a"/>
<line x1="200.50" y1="260.1" x2="200.50" y2="274.5" stroke="#333" stroke-width="1"/>
<rect x="198.50" y="264.0" width="3" height="1.0" fill="#fff" stroke="#333" stroke-width="1"/>
<line x1="203.50" y1="260.1" x2="203.50" y2="272.9" stroke="#e86080" stroke-width="1"/>
<rect x="201.00" y="264.0" width="3.5" height="2.0" fill="#e0103a"/>
<line x1="206.50" y1="257.0" x2="206.50" y2="269.3" stroke="#333" stroke-width="1"/>
<rect x="204.50" y="263.9" width="3" height="2.0" fill="#fff" stroke="#333" stroke-width="1"/>
<line x1="209.50" y1="260.0" x2="209.50" y2="275.0" stroke="#e86080" stroke-width="1"/>
<rect x="207.00" y="263.9" width="3.5" height="2.5" fill="#e0103a"/>
<line x1="211.50" y1="257.7" x2="211.50" y2="268.8" stroke="#333" stroke-width="1"/>
<rect x="209.50" y="261.6" width="3" height="4.9" fill="#fff" stroke="#333" stroke-width="1"/>
<line x1="214.50" y1="259.0" x2="214.50" y2="265.6" stroke="#333" stroke-width="1"/>
<rect x="212.50" y="261.2" width="3" height="1.0" fill="#fff" stroke="#333" stroke-width="1"/>
<line x1="217.50" y1="256.8" x2="217.50" y2="265.5" stroke="#333" stroke-width="1"/>
<rect x="215.50" y="257.2" width="3" height="4.0" fill="#fff" stroke="#333" stroke-width="1"/>
<line x1="220.50" y1="248.0" x2="220.50" y2="258.8" stroke="#333" stroke-width="1"/>
<rect x="218.50" y="250.2" width="3" height="7.0" fill="#fff" stroke="#333" stroke-width="1"/>
<line x1="223.50" y1="246.3" x2="223.50" y2="260.9" stroke="#e86080" stroke-width="1"/>
<rect x="221.00" y="250.2" width="3.5" height="8.6" fill="#e0103a"/>
<line x1="226.50" y1="255.7" x2="226.50" y2="270.1" stroke="#e86080" stroke-width="1"/>
<rect x="224.00" y="258.8" width="3.5" height="9.3" fill="#e0103a"/>
<line x1="229.50" y1="263.2" x2="229.50" y2="274.2" stroke="#333" stroke-width="1"/>
<rect x="227.50" y="267.1" width="3" height="1.0" fill="#fff" stroke="#333" stroke-width="1"/>
<line x1="232.50" y1="259.8" x2="232.50" y2="269.0" stroke="#333" stroke-width="1"/>
<rect x="230.50" y="265.3" width="3" height="1.8" fill="#fff" stroke="#333" stroke-width="1"/>
<line x1="235.50" y1="257.3" x2="235.50" y2="270.6" stroke="#e86080" stroke-width="1"/>
<rect x="233.00" y="265.3" width="3.5" height="1.9" fill="#e0103a"/>
<line x1="238.50" y1="262.7" x2="238.50" y2="272.7" stroke="#333" stroke-width="1"/>
<rect x="236.50" y="266.6" width="3" height="1.0" fill="#fff" stroke="#333" stroke-width="1"/>
<line x1="241.50" y1="259.3" x2="241.50" y2="268.0" stroke="#333" stroke-width="1"/>
<rect x="239.50" y="263.2" width="3" height="3.4" fill="#fff" stroke="#333" stroke-width="1"/>
<line x1="244.50" y1="253.7" x2="244.50" y2="267.2" stroke="#333" stroke-width="1"/>
<rect x="242.50" y="254.9" width="3" height="8.3" fill="#fff" stroke="#333" stroke-width="1"/>
<line x1="247.50" y1="249.1" x2="247.50" y2="271.1" stroke="#e86080" stroke-width="1"/>
<rect x="245.00" y="254.9" width="3.5" height="11.0" fill="#e0103a"/>
<line x1="250.50" y1="236.3" x2="250.50" y2="268.0" stroke="#333" stroke-width="1"/>
<rect x="248.50" y="255.0" width="3" height="11.0" fill="#fff" stroke="#333" stroke-width="1"/>
<line x1="253.50" y1="224.4" x2="253.50" y2="258.8" stroke="#333" stroke-width="1"/>
<rect x="251.50" y="244.3" width="3" height="10.7" fill="#fff" stroke="#333" stroke-width="1"/>
<line x1="255.50" y1="224.4" x2="255.50" y2="249.8" stroke="#e86080" stroke-width="1"/>
<rect x="253.00" y="244.3" width="3.5" height="1.4" fill="#e0103a"/>
<line x1="258.50" y1="237.6" x2="258.50" y2="255.4" stroke="#e86080" stroke-width="1"/>
<rect x="256.00" y="245.7" width="3.5" height="8.0" fill="#e0103a"/>
<line x1="261.50" y1="240.2" x2="261.50" y2="257.8" stroke="#333" stroke-width="1"/>
<rect x="259.50" y="247.2" width="3" height="6.5" fill="#fff" stroke="#333" stroke-width="1"/>
<line x1="264.50" y1="243.3" x2="264.50" y2="251.4" stroke="#e86080" stroke-width="1"/>
<rect x="262.00" y="247.2" width="3.5" height="2.7" fill="#e0103a"/>
<line x1="267.50" y1="236.3" x2="267.50" y2="254.0" stroke="#333" stroke-width="1"/>
<rect x="265.50" y="240.2" width="3" height="9.7" fill="#fff" stroke="#333" stroke-width="1"/>
<line x1="270.50" y1="225.7" x2="270.50" y2="244.3" stroke="#333" stroke-width="1"/>
<rect x="268.50" y="229.9" width="3" height="10.4" fill="#fff" stroke="#333" stroke-width="1"/>
<line x1="273.50" y1="222.4" x2="273.50" y2="238.9" stroke="#e86080" stroke-width="1"/>
<rect x="271.00" y="229.9" width="3.5" height="4.9" fill="#e0103a"/>
<line x1="276.50" y1="219.0" x2="276.50" y2="239.6" stroke="#333" stroke-width="1"/>
<rect x="274.50" y="222.9" width="3" height="11.9" fill="#fff" stroke="#333" stroke-width="1"/>
<line x1="279.50" y1="219.8" x2="279.50" y2="226.9" stroke="#333" stroke-width="1"/>
<rect x="277.50" y="222.9" width="3" height="1.0" fill="#fff" stroke="#333" stroke-width="1"/>
<line x1="282.50" y1="219.1" x2="282.50" y2="235.0" stroke="#e86080" stroke-width="1"/>
<rect x="280.00" y="222.9" width="3.5" height="8.0" fill="#e0103a"/>
<line x1="285.50" y1="227.0" x2="285.50" y2="250.8" stroke="#e86080" stroke-width="1"/>
<rect x="283.00" y="230.9" width="3.5" height="19.7" fill="#e0103a"/>
<line x1="288.50" y1="238.2" x2="288.50" y2="254.7" stroke="#333" stroke-width="1"/>
<rect x="286.50" y="250.0" width="3" height="1.0" fill="#fff" stroke="#333" stroke-width="1"/>
<line x1="291.50" y1="246.1" x2="291.50" y2="258.0" stroke="#e86080" stroke-width="1"/>
<rect x="289.00" y="250.0" width="3.5" height="1.1" fill="#e0103a"/>
<line x1="294.50" y1="239.6" x2="294.50" y2="255.2" stroke="#333" stroke-width="1"/>
<rect x="292.50" y="247.5" width="3" height="3.7" fill="#fff" stroke="#333" stroke-width="1"/>
<line x1="297.50" y1="243.6" x2="297.50" y2="262.1" stroke="#e86080" stroke-width="1"/>
<rect x="295.00" y="247.5" width="3.5" height="6.0" fill="#e0103a"/>
<line x1="299.50" y1="247.7" x2="299.50" y2="259.0" stroke="#333" stroke-width="1"/>
<rect x="297.50" y="251.6" width="3" height="1.9" fill="#fff" stroke="#333" stroke-width="1"/>
<line x1="302.50" y1="247.7" x2="302.50" y2="258.6" stroke="#e86080" stroke-width="1"/>
<rect x="300.00" y="251.6" width="3.5" height="3.0" fill="#e0103a"/>
<line x1="305.50" y1="241.9" x2="305.50" y2="258.6" stroke="#333" stroke-width="1"/>
<rect x="303.50" y="245.8" width="3" height="8.7" fill="#fff" stroke="#333" stroke-width="1"/>
<line x1="308.50" y1="236.0" x2="308.50" y2="250.4" stroke="#e86080" stroke-width="1"/>
<rect x="306.00" y="245.8" width="3.5" height="1.0" fill="#e0103a"/>
<line x1="311.50" y1="242.5" x2="311.50" y2="257.5" stroke="#e86080" stroke-width="1"/>
<rect x="309.00" y="246.4" width="3.5" height="10.9" fill="#e0103a"/>
<line x1="314.50" y1="253.4" x2="314.50" y2="267.3" stroke="#e86080" stroke-width="1"/>
<rect x="312.00" y="257.3" width="3.5" height="9.3" fill="#e0103a"/>
<line x1="317.50" y1="262.7" x2="317.50" y2="279.1" stroke="#e86080" stroke-width="1"/>
<rect x="315.00" y="266.6" width="3.5" height="2.8" fill="#e0103a"/>
<line x1="320.50" y1="265.5" x2="320.50" y2="285.8" stroke="#e86080" stroke-width="1"/>
<rect x="318.00" y="269.4" width="3.5" height="12.3" fill="#e0103a"/>
<line x1="323.50" y1="268.2" x2="323.50" y2="302.8" stroke="#333" stroke-width="1"/>
<rect x="321.50" y="280.5" width="3" height="1.2" fill="#fff" stroke="#333" stroke-width="1"/>
<line x1="326.50" y1="277.0" x2="326.50" y2="288.0" stroke="#e86080" stroke-width="1"/>
<rect x="324.00" y="280.5" width="3.5" height="1.6" fill="#e0103a"/>
<line x1="329.50" y1="275.9" x2="329.50" y2="287.6" stroke="#e86080" stroke-width="1"/>
<rect x="327.00" y="282.1" width="3.5" height="1.4" fill="#e0103a"/>
<line x1="332.50" y1="279.6" x2="332.50" y2="316.5" stroke="#e86080" stroke-width="1"/>
<rect x="330.00" y="283.5" width="3.5" height="11.6" fill="#e0103a"/>
<line x1="335.50" y1="285.7" x2="335.50" y2="299.0" stroke="#333" stroke-width="1"/>
<rect x="333.50" y="291.5" width="3" height="3.7" fill="#fff" stroke="#333" stroke-width="1"/>
<line x1="338.50" y1="287.6" x2="338.50" y2="305.5" stroke="#e86080" stroke-width="1"/>
<rect x="336.00" y="291.5" width="3.5" height="5.8" fill="#e0103a"/>
<line x1="341.50" y1="276.4" x2="341.50" y2="300.6" stroke="#333" stroke-width="1"/>
<rect x="339.50" y="276.7" width="3" height="20.5" fill="#fff" stroke="#333" stroke-width="1"/>
<line x1="343.50" y1="275.3" x2="343.50" y2="293.6" stroke="#e86080" stroke-width="1"/>
<rect x="341.00" y="276.7" width="3.5" height="12.8" fill="#e0103a"/>
<line x1="346.50" y1="285.6" x2="346.50" y2="322.5" stroke="#e86080" stroke-width="1"/>
<rect x="344.00" y="289.5" width="3.5" height="28.5" fill="#e0103a"/>
<line x1="349.50" y1="306.0" x2="349.50" y2="327.8" stroke="#333" stroke-width="1"/>
<rect x="347.50" y="309.9" width="3" height="8.1" fill="#fff" stroke="#333" stroke-width="1"/>
<line x1="352.50" y1="295.6" x2="352.50" y2="313.9" stroke="#333" stroke-width="1"/>
<rect x="350.50" y="303.5" width="3" height="6.4" fill="#fff" stroke="#333" stroke-width="1"/>
<line x1="355.50" y1="299.6" x2="355.50" y2="317.6" stroke="#e86080" stroke-width="1"/>
<rect x="353.00" y="303.5" width="3.5" height="4.4" fill="#e0103a"/>
<line x1="358.50" y1="271.5" x2="358.50" y2="311.9" stroke="#333" stroke-width="1"/>
<rect x="356.50" y="272.4" width="3" height="35.4" fill="#fff" stroke="#333" stroke-width="1"/>
<line x1="361.50" y1="259.4" x2="361.50" y2="280.3" stroke="#333" stroke-width="1"/>
<rect x="359.50" y="260.2" width="3" height="12.2" fill="#fff" stroke="#333" stroke-width="1"/>
<line x1="364.50" y1="256.3" x2="364.50" y2="269.4" stroke="#e86080" stroke-width="1"/>
<rect x="362.00" y="260.2" width="3.5" height="5.1" fill="#e0103a"/>
<line x1="367.50" y1="256.2" x2="367.50" y2="273.3" stroke="#333" stroke-width="1"/>
<rect x="365.50" y="256.5" width="3" height="8.9" fill="#fff" stroke="#333" stroke-width="1"/>
<line x1="370.50" y1="243.0" x2="370.50" y2="256.8" stroke="#333" stroke-width="1"/>
<rect x="368.50" y="249.4" width="3" height="7.1" fill="#fff" stroke="#333" stroke-width="1"/>
<line x1="373.50" y1="241.0" x2="373.50" y2="253.4" stroke="#333" stroke-width="1"/>
<rect x="371.50" y="241.0" width="3" height="8.4" fill="#fff" stroke="#333" stroke-width="1"/>
<line x1="376.50" y1="226.5" x2="376.50" y2="252.9" stroke="#333" stroke-width="1"/>
<rect x="374.50" y="229.3" width="3" height="11.7" fill="#fff" stroke="#333" stroke-width="1"/>
<line x1="379.50" y1="225.3" x2="379.50" y2="250.9" stroke="#e86080" stroke-width="1"/>
<rect x="377.00" y="229.3" width="3.5" height="13.6" fill="#e0103a"/>
<line x1="382.50" y1="206.1" x2="382.50" y2="246.9" stroke="#333" stroke-width="1"/>
<rect x="380.50" y="228.9" width="3" height="13.9" fill="#fff" stroke="#333" stroke-width="1"/>
<line x1="385.50" y1="220.4" x2="385.50" y2="232.9" stroke="#333" stroke-width="1"/>
<rect x="383.50" y="224.3" width="3" height="4.6" fill="#fff" stroke="#333" stroke-width="1"/>
<line x1="387.50" y1="203.4" x2="387.50" y2="231.8" stroke="#333" stroke-width="1"/>
<rect x="385.50" y="215.6" width="3" height="8.7" fill="#fff" stroke="#333" stroke-width="1"/>
<line x1="390.50" y1="200.8" x2="390.50" y2="219.7" stroke="#333" stroke-width="1"/>
<rect x="388.50" y="204.7" width="3" height="10.9" fill="#fff" stroke="#333" stroke-width="1"/>
<line x1="393.50" y1="190.9" x2="393.50" y2="232.4" stroke="#e86080" stroke-width="1"/>
<rect x="391.00" y="204.7" width="3.5" height="14.0" fill="#e0103a"/>
<line x1="396.50" y1="214.8" x2="396.50" y2="233.7" stroke="#e86080" stroke-width="1"/>
<rect x="394.00" y="218.7" width="3.5" height="5.0" fill="#e0103a"/>
<line x1="399.50" y1="206.2" x2="399.50" y2="227.7" stroke="#333" stroke-width="1"/>
<rect x="397.50" y="210.1" width="3" height="13.6" fill="#fff" stroke="#333" stroke-width="1"/>
<line x1="402.50" y1="192.9" x2="402.50" y2="214.2" stroke="#333" stroke-width="1"/>
<rect x="400.50" y="197.2" width="3" height="12.9" fill="#fff" stroke="#333" stroke-width="1"/>
<line x1="405.50" y1="193.3" x2="405.50" y2="216.9" stroke="#e86080" stroke-width="1"/>
<rect x="403.00" y="197.2" width="3.5" height="19.3" fill="#e0103a"/>
<line x1="408.50" y1="191.2" x2="408.50" y2="220.5" stroke="#333" stroke-width="1"/>
<rect x="406.50" y="195.1" width="3" height="21.4" fill="#fff" stroke="#333" stroke-width="1"/>
<line x1="411.50" y1="179.5" x2="411.50" y2="205.9" stroke="#e86080" stroke-width="1"/>
<rect x="409.00" y="195.1" width="3.5" height="8.1" fill="#e0103a"/>
<line x1="414.50" y1="182.4" x2="414.50" y2="207.2" stroke="#333" stroke-width="1"/>
<rect x="412.50" y="196.5" width="3" height="6.7" fill="#fff" stroke="#333" stroke-width="1"/>
<line x1="417.50" y1="188.8" x2="417.50" y2="200.6" stroke="#333" stroke-width="1"/>
<rect x="415.50" y="192.7" width="3" height="3.8" fill="#fff" stroke="#333" stroke-width="1"/>
<line x1="420.50" y1="188.8" x2="420.50" y2="224.2" stroke="#e86080" stroke-width="1"/>
<rect x="418.00" y="192.7" width="3.5" height="26.4" fill="#e0103a"/>
<line x1="423.50" y1="196.4" x2="423.50" y2="223.2" stroke="#333" stroke-width="1"/>
<rect x="421.50" y="211.5" width="3" height="7.6" fill="#fff" stroke="#333" stroke-width="1"/>
<line x1="426.50" y1="199.3" x2="426.50" y2="220.7" stroke="#e86080" stroke-width="1"/>
<rect x="424.00" y="211.5" width="3.5" height="5.1" fill="#e0103a"/>
<line x1="429.50" y1="212.7" x2="429.50" y2="224.9" stroke="#e86080" stroke-width="1"/>
<rect x="427.00" y="216.6" width="3.5" height="4.7" fill="#e0103a"/>
<line x1="431.50" y1="208.4" x2="431.50" y2="225.6" stroke="#333" stroke-width="1"/>
<rect x="429.50" y="212.3" width="3" height="9.0" fill="#fff" stroke="#333" stroke-width="1"/>
<line x1="434.50" y1="205.9" x2="434.50" y2="216.7" stroke="#e86080" stroke-width="1"/>
<rect x="432.00" y="212.3" width="3.5" height="1.0" fill="#e0103a"/>
<line x1="437.50" y1="207.3" x2="437.50" y2="227.1" stroke="#e86080" stroke-width="1"/>
<rect x="435.00" y="212.6" width="3.5" height="8.8" fill="#e0103a"/>
<line x1="440.50" y1="217.1" x2="440.50" y2="228.6" stroke="#333" stroke-width="1"/>
<rect x="438.50" y="221.0" width="3" height="1.0" fill="#fff" stroke="#333" stroke-width="1"/>
<line x1="443.50" y1="209.2" x2="443.50" y2="225.1" stroke="#333" stroke-width="1"/>
<rect x="441.50" y="217.4" width="3" height="3.6" fill="#fff" stroke="#333" stroke-width="1"/>
<line x1="446.50" y1="209.2" x2="446.50" y2="250.9" stroke="#e86080" stroke-width="1"/>
<rect x="444.00" y="217.4" width="3.5" height="16.9" fill="#e0103a"/>
<line x1="449.50" y1="231.5" x2="449.50" y2="249.9" stroke="#e86080" stroke-width="1"/>
<rect x="447.00" y="234.4" width="3.5" height="11.5" fill="#e0103a"/>
<line x1="452.50" y1="238.4" x2="452.50" y2="269.7" stroke="#e86080" stroke-width="1"/>
<rect x="450.00" y="245.8" width="3.5" height="9.7" fill="#e0103a"/>
<line x1="455.50" y1="244.0" x2="455.50" y2="265.5" stroke="#333" stroke-width="1"/>
<rect x="453.50" y="253.3" width="3" height="2.3" fill="#fff" stroke="#333" stroke-width="1"/>
<line x1="458.50" y1="249.4" x2="458.50" y2="259.4" stroke="#e86080" stroke-width="1"/>
<rect x="456.00" y="253.3" width="3.5" height="2.1" fill="#e0103a"/>
<line x1="461.50" y1="239.0" x2="461.50" y2="259.4" stroke="#333" stroke-width="1"/>
<rect x="459.50" y="242.9" width="3" height="12.5" fill="#fff" stroke="#333" stroke-width="1"/>
<line x1="464.50" y1="217.3" x2="464.50" y2="244.0" stroke="#333" stroke-width="1"/>
<rect x="462.50" y="221.2" width="3" height="21.7" fill="#fff" stroke="#333" stroke-width="1"/>
<line x1="467.50" y1="212.7" x2="467.50" y2="225.3" stroke="#333" stroke-width="1"/>
<rect x="465.50" y="217.1" width="3" height="4.2" fill="#fff" stroke="#333" stroke-width="1"/>
<line x1="470.50" y1="212.0" x2="470.50" y2="233.5" stroke="#e86080" stroke-width="1"/>
<rect x="468.00" y="217.1" width="3.5" height="8.6" fill="#e0103a"/>
<line x1="473.50" y1="214.9" x2="473.50" y2="232.9" stroke="#333" stroke-width="1"/>
<rect x="471.50" y="218.9" width="3" height="6.8" fill="#fff" stroke="#333" stroke-width="1"/>
<line x1="475.50" y1="214.3" x2="475.50" y2="222.9" stroke="#333" stroke-width="1"/>
<rect x="473.50" y="218.2" width="3" height="1.0" fill="#fff" stroke="#333" stroke-width="1"/>
<line x1="478.50" y1="206.3" x2="478.50" y2="223.1" stroke="#333" stroke-width="1"/>
<rect x="476.50" y="210.2" width="3" height="8.0" fill="#fff" stroke="#333" stroke-width="1"/>
<line x1="481.50" y1="203.6" x2="481.50" y2="214.3" stroke="#333" stroke-width="1"/>
<rect x="479.50" y="204.6" width="3" height="5.6" fill="#fff" stroke="#333" stroke-width="1"/>
<line x1="484.50" y1="201.6" x2="484.50" y2="220.3" stroke="#e86080" stroke-width="1"/>
<rect x="482.00" y="204.6" width="3.5" height="12.7" fill="#e0103a"/>
<line x1="487.50" y1="213.4" x2="487.50" y2="227.9" stroke="#e86080" stroke-width="1"/>
<rect x="485.00" y="217.3" width="3.5" height="1.4" fill="#e0103a"/>
<line x1="490.50" y1="197.9" x2="490.50" y2="219.7" stroke="#333" stroke-width="1"/>
<rect x="488.50" y="201.8" width="3" height="16.9" fill="#fff" stroke="#333" stroke-width="1"/>
<line x1="493.50" y1="189.8" x2="493.50" y2="205.9" stroke="#333" stroke-width="1"/>
<rect x="491.50" y="193.7" width="3" height="8.1" fill="#fff" stroke="#333" stroke-width="1"/>
<line x1="496.50" y1="174.1" x2="496.50" y2="197.8" stroke="#333" stroke-width="1"/>
<rect x="494.50" y="183.7" width="3" height="10.0" fill="#fff" stroke="#333" stroke-width="1"/>
<line x1="499.50" y1="178.2" x2="499.50" y2="220.9" stroke="#e86080" stroke-width="1"/>
<rect x="497.00" y="183.7" width="3.5" height="18.7" fill="#e0103a"/>
<line x1="502.50" y1="198.5" x2="502.50" y2="226.7" stroke="#e86080" stroke-width="1"/>
<rect x="500.00" y="202.4" width="3.5" height="21.0" fill="#e0103a"/>
<line x1="505.50" y1="204.1" x2="505.50" y2="227.5" stroke="#333" stroke-width="1"/>
<rect x="503.50" y="208.0" width="3" height="15.5" fill="#fff" stroke="#333" stroke-width="1"/>
<line x1="508.50" y1="196.9" x2="508.50" y2="213.9" stroke="#333" stroke-width="1"/>
<rect x="506.50" y="205.6" width="3" height="2.4" fill="#fff" stroke="#333" stroke-width="1"/>
<line x1="511.50" y1="200.4" x2="511.50" y2="209.6" stroke="#333" stroke-width="1"/>
<rect x="509.50" y="204.3" width="3" height="1.3" fill="#fff" stroke="#333" stroke-width="1"/>
<line x1="514.50" y1="196.3" x2="514.50" y2="208.3" stroke="#333" stroke-width="1"/>
<rect x="512.50" y="200.5" width="3" height="3.8" fill="#fff" stroke="#333" stroke-width="1"/>
<line x1="517.50" y1="196.6" x2="517.50" y2="219.7" stroke="#e86080" stroke-width="1"/>
<rect x="515.00" y="200.5" width="3.5" height="8.9" fill="#e0103a"/>
<line x1="519.50" y1="196.9" x2="519.50" y2="212.7" stroke="#e86080" stroke-width="1"/>
<rect x="517.00" y="209.4" width="3.5" height="1.0" fill="#e0103a"/>
<line x1="522.50" y1="200.9" x2="522.50" y2="213.8" stroke="#333" stroke-width="1"/>
<rect x="520.50" y="204.8" width="3" height="5.0" fill="#fff" stroke="#333" stroke-width="1"/>
<line x1="525.50" y1="192.2" x2="525.50" y2="208.8" stroke="#333" stroke-width="1"/>
<rect x="523.50" y="197.1" width="3" height="7.6" fill="#fff" stroke="#333" stroke-width="1"/>
<line x1="528.50" y1="191.4" x2="528.50" y2="201.2" stroke="#333" stroke-width="1"/>
<rect x="526.50" y="195.3" width="3" height="1.8" fill="#fff" stroke="#333" stroke-width="1"/>
<line x1="531.50" y1="181.2" x2="531.50" y2="199.3" stroke="#333" stroke-width="1"/>
<rect x="529.50" y="185.1" width="3" height="10.2" fill="#fff" stroke="#333" stroke-width="1"/>
<line x1="534.50" y1="181.2" x2="534.50" y2="189.0" stroke="#e86080" stroke-width="1"/>
<rect x="532.00" y="185.1" width="3.5" height="1.3" fill="#e0103a"/>
<line x1="537.50" y1="168.0" x2="537.50" y2="194.3" stroke="#333" stroke-width="1"/>
<rect x="535.50" y="181.3" width="3" height="5.0" fill="#fff" stroke="#333" stroke-width="1"/>
<line x1="540.50" y1="170.1" x2="540.50" y2="185.4" stroke="#333" stroke-width="1"/>
<rect x="538.50" y="174.0" width="3" height="7.4" fill="#fff" stroke="#333" stroke-width="1"/>
<line x1="543.50" y1="170.1" x2="543.50" y2="187.7" stroke="#e86080" stroke-width="1"/>
<rect x="541.00" y="174.0" width="3.5" height="8.4" fill="#e0103a"/>
<line x1="546.50" y1="159.4" x2="546.50" y2="186.4" stroke="#333" stroke-width="1"/>
<rect x="544.50" y="163.3" width="3" height="19.0" fill="#fff" stroke="#333" stroke-width="1"/>
<line x1="549.50" y1="149.5" x2="549.50" y2="172.0" stroke="#e86080" stroke-width="1"/>
<rect x="547.00" y="163.3" width="3.5" height="4.4" fill="#e0103a"/>
<line x1="552.50" y1="145.2" x2="552.50" y2="171.8" stroke="#333" stroke-width="1"/>
<rect x="550.50" y="149.1" width="3" height="18.7" fill="#fff" stroke="#333" stroke-width="1"/>
<line x1="555.50" y1="136.4" x2="555.50" y2="153.1" stroke="#333" stroke-width="1"/>
<rect x="553.50" y="144.4" width="3" height="4.7" fill="#fff" stroke="#333" stroke-width="1"/>
<line x1="558.50" y1="140.4" x2="558.50" y2="154.3" stroke="#e86080" stroke-width="1"/>
<rect x="556.00" y="144.4" width="3.5" height="5.9" fill="#e0103a"/>
<line x1="561.50" y1="146.4" x2="561.50" y2="173.2" stroke="#e86080" stroke-width="1"/>
<rect x="559.00" y="150.3" width="3.5" height="14.0" fill="#e0103a"/>
<line x1="563.50" y1="148.5" x2="563.50" y2="170.6" stroke="#333" stroke-width="1"/>
<rect x="561.50" y="152.4" width="3" height="11.8" fill="#fff" stroke="#333" stroke-width="1"/>
<line x1="566.50" y1="140.5" x2="566.50" y2="161.4" stroke="#333" stroke-width="1"/>
<rect x="564.50" y="144.4" width="3" height="8.1" fill="#fff" stroke="#333" stroke-width="1"/>
<line x1="569.50" y1="129.8" x2="569.50" y2="148.4" stroke="#333" stroke-width="1"/>
<rect x="567.50" y="136.6" width="3" height="7.7" fill="#fff" stroke="#333" stroke-width="1"/>
<line x1="572.50" y1="130.4" x2="572.50" y2="153.0" stroke="#e86080" stroke-width="1"/>
<rect x="570.00" y="136.6" width="3.5" height="12.3" fill="#e0103a"/>
<line x1="575.50" y1="140.0" x2="575.50" y2="152.2" stroke="#333" stroke-width="1"/>
<rect x="573.50" y="143.9" width="3" height="5.0" fill="#fff" stroke="#333" stroke-width="1"/>
<line x1="578.50" y1="125.2" x2="578.50" y2="147.9" stroke="#333" stroke-width="1"/>
<rect x="576.50" y="134.4" width="3" height="9.5" fill="#fff" stroke="#333" stroke-width="1"/>
<line x1="581.50" y1="122.6" x2="581.50" y2="138.4" stroke="#333" stroke-width="1"/>
<rect x="579.50" y="126.5" width="3" height="7.9" fill="#fff" stroke="#333" stroke-width="1"/>
<line x1="584.50" y1="108.2" x2="584.50" y2="130.5" stroke="#333" stroke-width="1"/>
<rect x="582.50" y="111.8" width="3" height="14.7" fill="#fff" stroke="#333" stroke-width="1"/>
<line x1="587.50" y1="107.9" x2="587.50" y2="122.0" stroke="#e86080" stroke-width="1"/>
<rect x="585.00" y="111.8" width="3.5" height="4.5" fill="#e0103a"/>
<line x1="590.50" y1="112.4" x2="590.50" y2="132.1" stroke="#e86080" stroke-width="1"/>
<rect x="588.00" y="116.3" width="3.5" height="11.7" fill="#e0103a"/>
<line x1="593.50" y1="124.1" x2="593.50" y2="135.9" stroke="#e86080" stroke-width="1"/>
<rect x="591.00" y="128.0" width="3.5" height="4.7" fill="#e0103a"/>
<line x1="596.50" y1="121.7" x2="596.50" y2="136.8" stroke="#333" stroke-width="1"/>
<rect x="594.50" y="125.6" width="3" height="7.1" fill="#fff" stroke="#333" stroke-width="1"/>
<line x1="599.50" y1="110.7" x2="599.50" y2="129.7" stroke="#333" stroke-width="1"/>
<rect x="597.50" y="113.5" width="3" height="12.1" fill="#fff" stroke="#333" stroke-width="1"/>
<line x1="602.50" y1="109.6" x2="602.50" y2="128.7" stroke="#e86080" stroke-width="1"/>
<rect x="600.00" y="113.5" width="3.5" height="11.4" fill="#e0103a"/>
<line x1="605.50" y1="111.8" x2="605.50" y2="128.7" stroke="#333" stroke-width="1"/>
<rect x="603.50" y="115.7" width="3" height="9.3" fill="#fff" stroke="#333" stroke-width="1"/>
<line x1="607.50" y1="102.0" x2="607.50" y2="119.7" stroke="#333" stroke-width="1"/>
<rect x="605.50" y="107.1" width="3" height="8.6" fill="#fff" stroke="#333" stroke-width="1"/>
<line x1="610.50" y1="103.1" x2="610.50" y2="113.8" stroke="#e86080" stroke-width="1"/>
<rect x="608.00" y="107.1" width="3.5" height="1.0" fill="#e0103a"/>
<line x1="613.50" y1="100.0" x2="613.50" y2="111.8" stroke="#333" stroke-width="1"/>
<rect x="611.50" y="103.9" width="3" height="4.1" fill="#fff" stroke="#333" stroke-width="1"/>
<line x1="616.50" y1="95.4" x2="616.50" y2="105.6" stroke="#333" stroke-width="1"/>
<rect x="614.50" y="103.1" width="3" height="1.0" fill="#fff" stroke="#333" stroke-width="1"/>
<line x1="619.50" y1="98.1" x2="619.50" y2="113.7" stroke="#e86080" stroke-width="1"/>
<rect x="617.00" y="103.1" width="3.5" height="6.5" fill="#e0103a"/>
<line x1="622.50" y1="105.7" x2="622.50" y2="126.2" stroke="#e86080" stroke-width="1"/>
<rect x="620.00" y="109.6" width="3.5" height="12.6" fill="#e0103a"/>
<line x1="625.50" y1="118.3" x2="625.50" y2="133.7" stroke="#e86080" stroke-width="1"/>
<rect x="623.00" y="122.2" width="3.5" height="7.8" fill="#e0103a"/>
<line x1="628.50" y1="118.2" x2="628.50" y2="134.0" stroke="#333" stroke-width="1"/>
<rect x="626.50" y="122.1" width="3" height="7.9" fill="#fff" stroke="#333" stroke-width="1"/>
<line x1="631.50" y1="118.2" x2="631.50" y2="129.6" stroke="#e86080" stroke-width="1"/>
<rect x="629.00" y="122.1" width="3.5" height="3.5" fill="#e0103a"/>
<line x1="634.50" y1="121.7" x2="634.50" y2="148.5" stroke="#e86080" stroke-width="1"/>
<rect x="632.00" y="125.6" width="3.5" height="5.5" fill="#e0103a"/>
<line x1="637.50" y1="120.3" x2="637.50" y2="132.4" stroke="#333" stroke-width="1"/>
<rect x="635.50" y="124.2" width="3" height="6.9" fill="#fff" stroke="#333" stroke-width="1"/>
<line x1="640.50" y1="115.2" x2="640.50" y2="133.0" stroke="#333" stroke-width="1"/>
<rect x="638.50" y="117.0" width="3" height="7.3" fill="#fff" stroke="#333" stroke-width="1"/>
<line x1="643.50" y1="114.6" x2="643.50" y2="126.4" stroke="#e86080" stroke-width="1"/>
<rect x="641.00" y="117.0" width="3.5" height="1.0" fill="#e0103a"/>
<line x1="646.50" y1="113.3" x2="646.50" y2="125.8" stroke="#e86080" stroke-width="1"/>
<rect x="644.00" y="117.2" width="3.5" height="3.0" fill="#e0103a"/>
<line x1="649.50" y1="105.1" x2="649.50" y2="124.3" stroke="#333" stroke-width="1"/>
<rect x="647.50" y="109.0" width="3" height="11.3" fill="#fff" stroke="#333" stroke-width="1"/>
<line x1="651.50" y1="93.6" x2="651.50" y2="113.0" stroke="#333" stroke-width="1"/>
<rect x="649.50" y="97.5" width="3" height="11.5" fill="#fff" stroke="#333" stroke-width="1"/>
<line x1="654.50" y1="93.6" x2="654.50" y2="111.9" stroke="#e86080" stroke-width="1"/>
<rect x="652.00" y="97.5" width="3.5" height="6.2" fill="#e0103a"/>
<line x1="657.50" y1="88.7" x2="657.50" y2="107.7" stroke="#333" stroke-width="1"/>
<rect x="655.50" y="92.6" width="3" height="11.1" fill="#fff" stroke="#333" stroke-width="1"/>
<line x1="660.50" y1="74.0" x2="660.50" y2="96.6" stroke="#333" stroke-width="1"/>
<rect x="658.50" y="75.9" width="3" height="16.6" fill="#fff" stroke="#333" stroke-width="1"/>
<line x1="663.50" y1="70.0" x2="663.50" y2="85.9" stroke="#e86080" stroke-width="1"/>
<rect x="661.00" y="75.9" width="3.5" height="7.2" fill="#e0103a"/>
<line x1="666.50" y1="70.3" x2="666.50" y2="87.2" stroke="#333" stroke-width="1"/>
<rect x="664.50" y="74.2" width="3" height="8.9" fill="#fff" stroke="#333" stroke-width="1"/>
<line x1="669.50" y1="70.3" x2="669.50" y2="87.9" stroke="#e86080" stroke-width="1"/>
<rect x="667.00" y="74.2" width="3.5" height="5.1" fill="#e0103a"/>
<line x1="672.50" y1="63.6" x2="672.50" y2="83.4" stroke="#333" stroke-width="1"/>
<rect x="670.50" y="67.5" width="3" height="11.9" fill="#fff" stroke="#333" stroke-width="1"/>
<line x1="675.50" y1="57.6" x2="675.50" y2="86.5" stroke="#e86080" stroke-width="1"/>
<rect x="673.00" y="67.5" width="3.5" height="1.0" fill="#e0103a"/>
<line x1="678.50" y1="51.3" x2="678.50" y2="71.8" stroke="#333" stroke-width="1"/>
<rect x="676.50" y="55.2" width="3" height="12.6" fill="#fff" stroke="#333" stroke-width="1"/>
<line x1="681.50" y1="38.2" x2="681.50" y2="59.3" stroke="#333" stroke-width="1"/>
<rect x="679.50" y="42.1" width="3" height="13.1" fill="#fff" stroke="#333" stroke-width="1"/>
<line x1="684.50" y1="27.2" x2="684.50" y2="46.1" stroke="#333" stroke-width="1"/>
<rect x="682.50" y="31.3" width="3" height="10.8" fill="#fff" stroke="#333" stroke-width="1"/>
<line x1="687.50" y1="24.4" x2="687.50" y2="46.4" stroke="#e86080" stroke-width="1"/>
<rect x="685.00" y="31.3" width="3.5" height="13.7" fill="#e0103a"/>
<line x1="690.50" y1="41.1" x2="690.50" y2="55.6" stroke="#e86080" stroke-width="1"/>
<rect x="688.00" y="45.0" width="3.5" height="8.2" fill="#e0103a"/>
<line x1="693.50" y1="49.0" x2="693.50" y2="79.3" stroke="#e86080" stroke-width="1"/>
<rect x="691.00" y="53.2" width="3.5" height="15.6" fill="#e0103a"/>
<line x1="695.50" y1="64.9" x2="695.50" y2="125.6" stroke="#e86080" stroke-width="1"/>
<rect x="693.00" y="68.8" width="3.5" height="44.8" fill="#e0103a"/>
<line x1="698.50" y1="107.1" x2="698.50" y2="142.7" stroke="#e86080" stroke-width="1"/>
<rect x="696.00" y="113.7" width="3.5" height="25.0" fill="#e0103a"/>
<line x1="701.50" y1="134.7" x2="701.50" y2="187.7" stroke="#e86080" stroke-width="1"/>
<rect x="699.00" y="138.6" width="3.5" height="22.6" fill="#e0103a"/>
<line x1="704.50" y1="147.6" x2="704.50" y2="173.0" stroke="#e86080" stroke-width="1"/>
<rect x="702.00" y="161.3" width="3.5" height="7.7" fill="#e0103a"/>
<line x1="707.50" y1="156.9" x2="707.50" y2="181.8" stroke="#333" stroke-width="1"/>
<rect x="705.50" y="160.9" width="3" height="8.1" fill="#fff" stroke="#333" stroke-width="1"/>
<line x1="710.50" y1="137.7" x2="710.50" y2="175.2" stroke="#333" stroke-width="1"/>
<rect x="708.50" y="149.1" width="3" height="11.8" fill="#fff" stroke="#333" stroke-width="1"/>
<line x1="713.50" y1="141.9" x2="713.50" y2="156.1" stroke="#333" stroke-width="1"/>
<rect x="711.50" y="145.8" width="3" height="3.3" fill="#fff" stroke="#333" stroke-width="1"/>
<line x1="716.50" y1="123.4" x2="716.50" y2="147.3" stroke="#333" stroke-width="1"/>
<rect x="714.50" y="124.5" width="3" height="21.7" fill="#fff" stroke="#333" stroke-width="1"/>
<polyline points="197.5,200.7 200.5,200.8 203.5,200.9 206.5,200.9 209.5,200.9 211.5,200.9 214.5,201.0 217.5,202.4 220.5,212.2 223.5,220.7 226.5,224.8 229.5,229.4 232.5,229.9 235.5,229.9 238.5,229.9 241.5,230.3 244.5,230.6 247.5,230.9 250.5,231.5 253.5,231.8 255.5,232.2 258.5,233.6 261.5,234.1 264.5,233.8 267.5,232.9 270.5,230.8 273.5,229.6 276.5,227.1 279.5,225.2 282.5,224.3 285.5,224.6 288.5,224.9 291.5,225.2 294.5,225.2 297.5,225.2 299.5,225.1 302.5,225.2 305.5,225.0 308.5,224.9 311.5,225.1 314.5,225.2 317.5,225.2 320.5,224.9 323.5,224.6 326.5,224.4 329.5,224.1 332.5,223.7 335.5,223.7 338.5,223.2 341.5,223.5 343.5,223.4 346.5,222.0 349.5,221.0 352.5,220.4 355.5,219.7 358.5,219.7 361.5,219.7 364.5,219.7 367.5,219.6 370.5,219.3 373.5,218.6 376.5,217.2 379.5,216.8 382.5,215.6 385.5,214.0 387.5,211.5 390.5,207.8 393.5,206.1 396.5,204.9 399.5,202.6 402.5,198.9 405.5,197.6 408.5,194.2 411.5,192.0 414.5,189.4 417.5,186.6 420.5,185.8 423.5,184.8 426.5,184.0 429.5,183.5 431.5,182.8 434.5,182.1 437.5,182.0 440.5,182.0 443.5,181.5 446.5,181.4 449.5,181.3 452.5,181.4 455.5,181.4 458.5,181.4 461.5,181.3 464.5,180.8 467.5,180.2 470.5,179.9 473.5,179.4 475.5,178.9 478.5,178.2 481.5,177.4 484.5,177.2 487.5,177.2 490.5,176.5 493.5,175.6 496.5,174.0 499.5,174.0 502.5,174.3 505.5,174.7 508.5,175.8 511.5,177.0 514.5,178.0 517.5,180.0 519.5,180.8 522.5,181.1 525.5,181.3 528.5,181.2 531.5,180.1 534.5,178.9 537.5,177.1 540.5,174.9 543.5,173.5 546.5,169.8 549.5,167.1 552.5,161.9 555.5,156.5 558.5,152.9 561.5,151.1 563.5,148.4 566.5,144.8 569.5,140.6 572.5,138.3 575.5,135.6 578.5,132.2 581.5,128.0 584.5,122.1 587.5,117.7 590.5,115.1 593.5,113.0 596.5,110.5 599.5,107.1 602.5,105.1 605.5,102.4 607.5,99.3 610.5,96.7 613.5,94.0 616.5,91.6 619.5,90.1 622.5,89.4 625.5,88.9 628.5,88.1 631.5,87.6 634.5,87.4 637.5,87.0 640.5,86.2 643.5,85.4 646.5,85.1 649.5,84.3 651.5,82.5 654.5,81.3 657.5,79.1 660.5,75.7 663.5,73.8 666.5,70.9 669.5,68.9 672.5,65.8 675.5,63.0 678.5,59.2 681.5,53.8 684.5,47.3 687.5,43.7 690.5,41.5 693.5,40.5 695.5,41.0 698.5,41.5 701.5,41.6 704.5,41.8 707.5,41.8 710.5,42.0 713.5,42.1 716.5,42.2" fill="none" stroke="#338833" stroke-width="1.1"/>
<polyline points="197.5,335.0 200.5,336.0 203.5,337.1 206.5,337.3 209.5,337.1 211.5,336.4 214.5,337.1 217.5,336.0 220.5,315.7 223.5,302.0 226.5,297.6 229.5,292.6 232.5,292.8 235.5,293.3 238.5,293.8 241.5,294.0 244.5,293.8 247.5,294.2 250.5,293.9 253.5,293.6 255.5,293.2 258.5,291.9 261.5,291.4 264.5,291.5 267.5,292.0 270.5,293.9 273.5,294.9 276.5,297.9 279.5,300.2 282.5,301.3 285.5,301.1 288.5,301.0 291.5,300.8 294.5,300.8 297.5,300.8 299.5,300.8 302.5,300.8 305.5,300.9 308.5,300.9 311.5,301.0 314.5,301.5 317.5,301.8 320.5,303.2 323.5,304.6 326.5,306.1 329.5,307.1 332.5,308.5 335.5,308.7 338.5,310.3 341.5,309.0 343.5,309.4 346.5,314.6 349.5,319.2 352.5,323.1 355.5,327.4 358.5,327.8 361.5,327.7 364.5,327.7 367.5,327.5 370.5,327.1 373.5,327.3 376.5,328.7 379.5,328.8 382.5,330.2 385.5,332.1 387.5,334.9 390.5,340.5 393.5,342.0 396.5,342.4 399.5,345.1 402.5,351.6 405.5,352.9 408.5,358.8 411.5,362.3 414.5,368.2 417.5,374.9 420.5,374.6 423.5,375.6 426.5,375.6 429.5,375.7 431.5,376.9 434.5,377.9 437.5,378.0 440.5,378.1 443.5,378.6 446.5,377.6 449.5,377.2 452.5,377.7 455.5,378.2 458.5,378.4 461.5,377.7 464.5,376.4 467.5,376.1 470.5,375.2 473.5,373.5 475.5,370.5 478.5,367.6 481.5,363.3 484.5,357.9 487.5,352.3 490.5,347.6 493.5,342.2 496.5,339.3 499.5,331.6 502.5,326.3 505.5,319.3 508.5,308.7 511.5,299.1 514.5,290.5 517.5,280.9 519.5,275.7 522.5,272.1 525.5,268.0 528.5,265.0 531.5,263.9 534.5,263.2 537.5,264.1 540.5,264.7 543.5,264.9 546.5,269.2 549.5,272.3 552.5,281.4 555.5,291.0 558.5,296.4 561.5,298.4 563.5,303.8 566.5,310.3 569.5,321.3 572.5,326.0 575.5,332.5 578.5,343.4 581.5,355.8 584.5,383.2 587.5,404.5 590.5,411.4 593.5,415.4 596.5,423.4 599.5,440.2 602.5,441.0 605.5,450.8 607.5,462.3 610.5,460.9 613.5,455.8 616.5,447.5 619.5,426.9 622.5,403.7 625.5,387.4 628.5,375.1 631.5,360.0 634.5,346.7 637.5,335.0 640.5,326.7 643.5,319.2 646.5,308.6 649.5,299.9 651.5,297.2 654.5,293.1 657.5,293.6 660.5,298.0 663.5,292.4 666.5,292.8 669.5,289.0 672.5,290.5 675.5,290.3 678.5,295.2 681.5,310.7 684.5,341.1 687.5,347.8 690.5,341.7 693.5,326.9 695.5,309.5 698.5,299.3 701.5,296.4 704.5,293.3 707.5,292.7 710.5,288.6 713.5,287.9 716.5,284.4" fill="none" stroke="#338833" stroke-width="1.1"/>
<polyline points="197.5,249.1 200.5,249.4 203.5,249.7 206.5,249.7 209.5,249.7 211.5,249.6 214.5,249.8 217.5,250.6 220.5,252.6 223.5,254.3 226.5,255.5 229.5,256.6 232.5,257.0 235.5,257.2 238.5,257.4 241.5,257.7 244.5,257.9 247.5,258.2 250.5,258.4 253.5,258.5 255.5,258.6 258.5,259.0 261.5,259.2 264.5,259.0 267.5,258.7 270.5,258.0 273.5,257.6 276.5,257.1 279.5,256.7 282.5,256.4 285.5,256.6 288.5,256.7 291.5,256.8 294.5,256.8 297.5,256.8 299.5,256.7 302.5,256.8 305.5,256.7 308.5,256.7 311.5,256.8 314.5,257.1 317.5,257.2 320.5,257.4 323.5,257.7 326.5,258.0 329.5,258.2 332.5,258.4 335.5,258.4 338.5,258.6 341.5,258.4 343.5,258.5 346.5,259.1 349.5,259.8 352.5,260.5 355.5,261.3 358.5,261.4 361.5,261.3 364.5,261.3 367.5,261.2 370.5,260.9 373.5,260.4 376.5,259.8 379.5,259.5 382.5,259.0 385.5,258.3 387.5,257.2 390.5,255.8 393.5,254.9 396.5,254.0 399.5,252.8 402.5,251.3 405.5,250.5 408.5,249.0 411.5,247.9 414.5,246.7 417.5,245.5 420.5,244.8 423.5,244.1 426.5,243.4 429.5,243.0 431.5,242.6 434.5,242.2 437.5,242.1 440.5,242.1 443.5,241.8 446.5,241.5 449.5,241.4 452.5,241.5 455.5,241.6 458.5,241.6 461.5,241.5 464.5,240.9 467.5,240.3 470.5,239.9 473.5,239.2 475.5,238.3 478.5,237.3 481.5,235.9 484.5,234.9 487.5,233.9 490.5,232.5 493.5,230.8 496.5,228.9 499.5,227.4 502.5,226.6 505.5,225.4 508.5,223.8 511.5,222.4 514.5,220.9 517.5,219.6 519.5,218.6 522.5,217.7 525.5,216.6 528.5,215.6 531.5,214.4 534.5,213.4 537.5,212.5 540.5,211.2 543.5,210.3 546.5,209.0 549.5,208.0 552.5,206.6 555.5,204.9 558.5,203.3 561.5,202.4 563.5,201.3 566.5,199.7 569.5,198.3 572.5,197.1 575.5,195.9 578.5,194.5 581.5,192.4 584.5,190.0 587.5,187.7 590.5,185.7 593.5,184.1 596.5,182.3 599.5,180.0 602.5,178.1 605.5,176.0 607.5,173.4 610.5,170.9 613.5,168.2 616.5,165.5 619.5,163.1 622.5,161.2 625.5,159.7 628.5,158.1 631.5,156.5 634.5,155.1 637.5,153.6 640.5,152.0 643.5,150.5 646.5,149.0 649.5,147.2 651.5,145.2 654.5,143.6 657.5,141.9 660.5,139.4 663.5,137.0 666.5,134.6 669.5,132.3 672.5,129.8 675.5,127.4 678.5,124.5 681.5,121.3 684.5,117.8 687.5,114.9 690.5,112.4 693.5,110.5 695.5,109.5 698.5,109.0 701.5,108.9 704.5,108.8 707.5,108.7 710.5,108.5 713.5,108.5 716.5,108.2" fill="none" stroke="#338833" stroke-width="1" stroke-dasharray="1.5,2"/>
<polyline points="135.5,199.3 138.5,199.3 141.5,199.3 144.5,199.4 147.5,199.5 150.5,199.8 153.5,199.8 156.5,201.0 159.5,212.4 162.5,223.1 165.5,228.2 167.5,234.0 170.5,232.8 173.5,231.0 176.5,230.0 179.5,229.1 182.5,228.7 185.5,228.9 188.5,229.6 191.5,230.6 194.5,231.6 197.5,233.5 200.5,234.8 203.5,234.9 206.5,235.0 209.5,235.0 211.5,235.2 214.5,235.9 217.5,237.2 220.5,237.8 223.5,239.1 226.5,240.5 229.5,242.1 232.5,243.1 235.5,243.7 238.5,244.2 241.5,245.0 244.5,245.7 247.5,246.8 250.5,247.5 253.5,246.3 255.5,244.6 258.5,244.0 261.5,242.9 264.5,242.0 267.5,240.0 270.5,236.6 273.5,235.1 276.5,231.3 279.5,228.5 282.5,227.4 285.5,227.4 288.5,227.3 291.5,227.2 294.5,226.9 297.5,226.9 299.5,226.9 302.5,227.0 305.5,226.8 308.5,226.7 311.5,226.8 314.5,226.6 317.5,226.4 320.5,225.7 323.5,225.1 326.5,224.6 329.5,224.1 332.5,223.0 335.5,222.2 338.5,221.3 341.5,221.1 343.5,220.8 346.5,219.2 349.5,218.5 352.5,218.5 355.5,218.6 358.5,218.9 361.5,219.4 364.5,219.9 367.5,220.8 370.5,222.4 373.5,223.0 376.5,224.0 379.5,226.4 382.5,226.1 385.5,223.4 387.5,219.5 390.5,214.0 393.5,211.6 396.5,209.7 399.5,206.4 402.5,201.3 405.5,199.5 408.5,195.1 411.5,192.1 414.5,188.5 417.5,184.9 420.5,183.9 423.5,182.6 426.5,181.8 429.5,181.3 431.5,180.7 434.5,180.3 437.5,180.5 440.5,180.4 443.5,180.6 446.5,182.4 449.5,184.2 452.5,185.9 455.5,188.2 458.5,188.8 461.5,189.3 464.5,190.1 467.5,190.5 470.5,190.9 473.5,191.0 475.5,190.8 478.5,190.7 481.5,189.9 484.5,189.8 487.5,189.9 490.5,189.7 493.5,188.0 496.5,184.9 499.5,184.5 502.5,185.6 505.5,185.3 508.5,186.2 511.5,186.3 514.5,186.7 517.5,188.1 519.5,187.8 522.5,187.4 525.5,186.3 528.5,185.0 531.5,182.7 534.5,180.7 537.5,178.2 540.5,174.9 543.5,173.0 546.5,168.7 549.5,166.1 552.5,160.9 555.5,155.6 558.5,152.5 561.5,151.4 563.5,148.5 566.5,144.8 569.5,140.5 572.5,138.4 575.5,135.9 578.5,132.4 581.5,128.1 584.5,122.0 587.5,117.7 590.5,115.3 593.5,113.6 596.5,111.2 599.5,107.9 602.5,106.8 605.5,104.6 607.5,101.6 610.5,99.2 613.5,96.6 616.5,94.6 619.5,93.6 622.5,93.8 625.5,94.3 628.5,94.7 631.5,95.1 634.5,96.0 637.5,96.6 640.5,96.8 643.5,97.7 646.5,98.1 649.5,98.1 651.5,96.1 654.5,95.0 657.5,92.8 660.5,88.4 663.5,85.8 666.5,81.7 669.5,78.9 672.5,74.8 675.5,71.4 678.5,65.8 681.5,58.2 684.5,49.4 687.5,45.1 690.5,42.5 693.5,41.6 695.5,41.7 698.5,41.4 701.5,40.6 704.5,39.7 707.5,39.1 710.5,38.8 713.5,38.6 716.5,38.6" fill="none" stroke="#ff3030" stroke-width="1.1"/>
<polyline points="135.5,305.3 138.5,306.2 141.5,306.2 144.5,305.0 147.5,303.0 150.5,300.6 153.5,301.0 156.5,303.0 159.5,288.5 162.5,277.0 165.5,273.3 167.5,269.6 170.5,273.8 173.5,278.4 176.5,281.9 179.5,286.1 182.5,289.7 185.5,291.0 188.5,291.4 191.5,291.2 194.5,290.9 197.5,290.3 200.5,290.1 203.5,290.6 206.5,290.8 209.5,291.2 211.5,291.4 214.5,291.4 217.5,290.7 220.5,290.3 223.5,289.6 226.5,289.4 229.5,288.8 232.5,288.6 235.5,288.7 238.5,288.9 241.5,288.6 244.5,288.1 247.5,287.7 250.5,287.3 253.5,288.3 255.5,289.2 258.5,289.2 261.5,289.8 264.5,290.0 267.5,290.7 270.5,291.8 273.5,290.1 276.5,291.3 279.5,290.7 282.5,288.3 285.5,286.7 288.5,286.1 291.5,285.8 294.5,285.4 297.5,284.6 299.5,283.8 302.5,282.8 305.5,281.8 308.5,280.4 311.5,280.0 314.5,280.6 317.5,281.9 320.5,285.1 323.5,287.6 326.5,289.4 329.5,291.5 332.5,295.5 335.5,298.6 338.5,302.6 341.5,304.0 343.5,307.5 346.5,314.6 349.5,320.9 352.5,326.1 355.5,331.9 358.5,333.0 361.5,333.1 364.5,333.6 367.5,333.2 370.5,331.4 373.5,330.8 376.5,329.3 379.5,325.9 382.5,326.4 385.5,329.7 387.5,335.1 390.5,344.0 393.5,347.2 396.5,348.9 399.5,353.6 402.5,362.5 405.5,364.5 408.5,373.1 411.5,376.5 414.5,380.0 417.5,383.0 420.5,376.6 423.5,370.9 426.5,364.1 429.5,356.7 431.5,347.6 434.5,338.9 437.5,329.2 440.5,323.0 443.5,314.6 446.5,302.5 449.5,292.9 452.5,285.6 455.5,277.2 458.5,274.6 461.5,272.4 464.5,267.5 467.5,263.7 470.5,261.2 473.5,259.4 475.5,258.8 478.5,256.5 481.5,255.8 484.5,255.4 487.5,255.6 490.5,255.7 493.5,256.5 496.5,258.4 499.5,258.5 502.5,258.7 505.5,258.5 508.5,257.9 511.5,257.9 514.5,257.6 517.5,256.5 519.5,256.3 522.5,256.4 525.5,256.7 528.5,256.8 531.5,258.5 534.5,259.7 537.5,260.9 540.5,263.1 543.5,263.5 546.5,265.7 549.5,264.0 552.5,265.5 555.5,267.2 558.5,264.3 561.5,259.4 563.5,259.2 566.5,260.5 569.5,261.9 572.5,259.8 575.5,258.0 578.5,258.8 581.5,261.6 584.5,267.1 587.5,267.6 590.5,265.8 593.5,263.5 596.5,263.3 599.5,262.5 602.5,254.4 605.5,250.0 607.5,247.1 610.5,242.9 613.5,239.3 616.5,233.3 619.5,225.2 622.5,216.4 625.5,208.7 628.5,201.2 631.5,195.0 634.5,188.6 637.5,182.6 640.5,177.7 643.5,171.1 646.5,167.1 649.5,162.6 651.5,161.9 654.5,160.6 657.5,159.7 660.5,160.2 663.5,159.1 666.5,160.6 669.5,160.9 672.5,161.6 675.5,161.7 678.5,165.9 681.5,174.9 684.5,189.0 687.5,193.2 690.5,191.9 693.5,186.9 695.5,185.2 698.5,188.9 701.5,195.0 704.5,203.8 707.5,212.7 710.5,219.5 713.5,226.4 716.5,229.6" fill="none" stroke="#ff3030" stroke-width="1.1"/>
<polyline points="135.5,240.3 138.5,240.6 141.5,240.6 144.5,240.3 147.5,239.9 150.5,239.4 153.5,239.5 156.5,240.9 159.5,244.2 162.5,246.9 165.5,248.5 167.5,250.4 170.5,251.4 173.5,252.2 176.5,253.0 179.5,254.1 182.5,255.2 185.5,255.8 188.5,256.4 191.5,256.9 194.5,257.4 197.5,258.4 200.5,259.1 203.5,259.3 206.5,259.5 209.5,259.7 211.5,259.9 214.5,260.3 217.5,260.8 220.5,261.0 223.5,261.6 226.5,262.3 229.5,263.1 232.5,263.6 235.5,264.0 238.5,264.4 241.5,264.7 244.5,264.9 247.5,265.4 250.5,265.6 253.5,265.4 255.5,264.7 258.5,264.4 261.5,263.9 264.5,263.5 267.5,262.5 270.5,260.9 273.5,259.3 276.5,257.4 279.5,255.4 282.5,253.8 285.5,253.3 288.5,252.9 291.5,252.8 294.5,252.5 297.5,252.1 299.5,251.8 302.5,251.5 305.5,251.0 308.5,250.4 311.5,250.3 314.5,250.4 317.5,250.8 320.5,251.6 323.5,252.1 326.5,252.5 329.5,252.9 332.5,253.5 335.5,254.1 338.5,254.8 341.5,255.2 343.5,256.1 346.5,257.2 349.5,258.5 352.5,260.0 355.5,261.7 358.5,262.2 361.5,262.6 364.5,263.1 367.5,263.6 370.5,264.3 373.5,264.6 376.5,264.8 379.5,265.6 382.5,265.5 385.5,264.5 387.5,263.2 390.5,261.3 393.5,260.3 396.5,259.2 399.5,257.6 402.5,255.4 405.5,254.3 408.5,252.3 411.5,250.4 414.5,247.9 417.5,245.3 420.5,243.5 423.5,241.5 426.5,239.7 429.5,238.1 431.5,235.9 434.5,233.9 437.5,232.1 440.5,230.7 443.5,228.9 446.5,227.3 449.5,226.1 452.5,225.2 455.5,224.2 458.5,223.8 461.5,223.4 464.5,222.3 467.5,221.3 470.5,220.7 473.5,220.1 475.5,219.8 478.5,218.9 481.5,218.2 484.5,218.0 487.5,218.1 490.5,218.0 493.5,217.1 496.5,215.8 499.5,215.6 502.5,216.4 505.5,216.1 508.5,216.5 511.5,216.5 514.5,216.7 517.5,217.2 519.5,216.9 522.5,216.7 525.5,216.1 528.5,215.3 531.5,214.4 534.5,213.5 537.5,212.2 540.5,210.6 543.5,209.5 546.5,207.2 549.5,204.8 552.5,201.6 555.5,198.2 558.5,195.2 561.5,193.0 563.5,190.8 566.5,188.5 569.5,185.7 572.5,183.6 575.5,181.3 578.5,178.9 581.5,176.3 584.5,172.8 587.5,169.5 590.5,167.3 593.5,165.4 596.5,163.5 599.5,160.7 602.5,158.1 605.5,155.4 607.5,152.5 610.5,149.7 613.5,146.9 616.5,143.9 619.5,141.3 622.5,139.3 625.5,137.7 628.5,135.9 631.5,134.4 634.5,133.1 637.5,131.7 640.5,130.2 643.5,128.6 646.5,127.4 649.5,125.9 651.5,124.3 654.5,123.1 657.5,121.4 660.5,118.7 663.5,116.6 666.5,114.4 669.5,112.6 672.5,110.1 675.5,107.8 678.5,105.2 681.5,102.1 684.5,99.0 687.5,96.5 690.5,94.2 693.5,92.4 695.5,92.1 698.5,92.7 701.5,93.4 704.5,94.4 707.5,95.6 710.5,96.5 713.5,97.4 716.5,98.0" fill="none" stroke="#ff3030" stroke-width="1" stroke-dasharray="1.5,2"/>
<polyline points="97.5,191.0 100.5,190.9 103.5,190.9 106.5,190.9 109.5,191.1 112.5,191.4 115.5,191.4 118.5,192.7 121.5,206.0 123.5,218.9 126.5,225.2 129.5,233.7 132.5,234.0 135.5,234.2 138.5,234.1 141.5,234.2 144.5,234.3 147.5,234.3 150.5,234.7 153.5,235.5 156.5,235.6 159.5,237.4 162.5,238.4 165.5,238.2 167.5,237.3 170.5,235.2 173.5,233.0 176.5,232.6 179.5,233.2 182.5,234.0 185.5,236.0 188.5,237.8 191.5,239.6 194.5,240.6 197.5,241.6 200.5,242.2 203.5,243.6 206.5,245.4 209.5,247.3 211.5,249.2 214.5,250.6 217.5,249.7 220.5,247.7 223.5,247.4 226.5,247.7 229.5,247.6 232.5,247.7 235.5,248.8 238.5,249.5 241.5,251.2 244.5,252.7 247.5,253.0 250.5,252.2 253.5,249.2 255.5,247.1 258.5,246.4 261.5,244.8 264.5,244.0 267.5,241.2 270.5,236.2 273.5,233.5 276.5,228.2 279.5,224.1 282.5,222.2 285.5,222.1 288.5,222.3 291.5,222.6 294.5,222.8 297.5,223.3 299.5,223.8 302.5,224.2 305.5,224.2 308.5,224.9 311.5,224.8 314.5,224.1 317.5,223.4 320.5,221.7 323.5,220.8 326.5,219.9 329.5,219.9 332.5,221.0 335.5,222.2 338.5,226.0 341.5,231.9 343.5,236.3 346.5,235.9 349.5,236.8 352.5,238.3 355.5,240.8 358.5,242.7 361.5,244.0 364.5,245.3 367.5,247.4 370.5,248.2 373.5,244.6 376.5,237.4 379.5,234.3 382.5,228.5 385.5,222.6 387.5,215.9 390.5,207.9 393.5,204.3 396.5,201.9 399.5,198.3 402.5,192.5 405.5,190.9 408.5,187.8 411.5,186.7 414.5,185.4 417.5,184.8 420.5,185.8 423.5,186.2 426.5,187.7 429.5,189.1 431.5,190.2 434.5,190.9 437.5,191.2 440.5,192.7 443.5,193.2 446.5,192.4 449.5,190.6 452.5,189.2 455.5,187.9 458.5,186.7 461.5,187.0 464.5,189.2 467.5,189.3 470.5,192.3 473.5,193.9 475.5,196.9 478.5,200.7 481.5,198.8 484.5,199.4 487.5,199.6 490.5,197.2 493.5,194.0 496.5,188.6 499.5,187.1 502.5,187.2 505.5,186.5 508.5,185.5 511.5,184.9 514.5,185.0 517.5,186.2 519.5,188.5 522.5,190.0 525.5,189.0 528.5,187.8 531.5,185.5 534.5,183.5 537.5,180.8 540.5,176.6 543.5,174.8 546.5,169.3 549.5,166.3 552.5,158.4 555.5,151.1 558.5,146.9 561.5,145.3 563.5,143.0 566.5,139.2 569.5,134.6 572.5,132.9 575.5,130.8 578.5,128.0 581.5,124.5 584.5,118.2 587.5,114.2 590.5,113.1 593.5,112.5 596.5,111.6 599.5,109.0 602.5,108.5 605.5,107.8 607.5,104.7 610.5,103.0 613.5,100.0 616.5,97.2 619.5,96.1 622.5,97.6 625.5,98.6 628.5,99.0 631.5,99.2 634.5,100.5 637.5,101.6 640.5,101.8 643.5,101.7 646.5,102.2 649.5,101.5 651.5,98.5 654.5,97.7 657.5,94.4 660.5,86.6 663.5,82.9 666.5,77.6 669.5,74.5 672.5,69.2 675.5,65.0 678.5,58.5 681.5,49.8 684.5,40.2 687.5,36.1 690.5,33.8 693.5,33.5 695.5,34.1 698.5,33.5 701.5,31.9 704.5,30.2 707.5,29.0 710.5,28.2 713.5,27.7 716.5,27.6" fill="none" stroke="#3535a0" stroke-width="1.1"/>
<polyline points="97.5,309.6 100.5,309.1 103.5,310.3 106.5,309.9 109.5,308.3 112.5,305.3 115.5,305.2 118.5,306.2 121.5,288.9 123.5,274.7 126.5,269.5 129.5,261.9 132.5,262.1 135.5,261.4 138.5,261.6 141.5,261.9 144.5,262.1 147.5,262.1 150.5,262.3 153.5,262.6 156.5,265.1 159.5,266.1 162.5,267.2 165.5,267.9 167.5,270.4 170.5,275.5 173.5,282.1 176.5,286.8 179.5,291.6 182.5,295.5 185.5,296.0 188.5,295.5 191.5,294.4 194.5,294.0 197.5,294.0 200.5,294.1 203.5,293.9 206.5,293.1 209.5,292.4 211.5,291.2 214.5,290.3 217.5,290.6 220.5,291.7 223.5,291.7 226.5,291.9 229.5,291.6 232.5,289.5 235.5,285.7 238.5,283.0 241.5,278.2 244.5,273.2 247.5,272.3 250.5,272.4 253.5,274.7 255.5,276.0 258.5,275.6 261.5,275.8 264.5,275.2 267.5,276.0 270.5,278.6 273.5,279.2 276.5,282.3 279.5,284.3 282.5,284.8 285.5,283.9 288.5,281.4 291.5,279.2 294.5,276.8 297.5,274.5 299.5,272.1 302.5,270.6 305.5,269.6 308.5,266.5 311.5,266.9 314.5,270.3 317.5,273.9 320.5,279.5 323.5,284.8 326.5,290.1 329.5,295.5 332.5,302.1 335.5,307.5 338.5,310.5 341.5,307.4 343.5,307.4 346.5,316.6 349.5,322.9 352.5,327.2 355.5,330.9 358.5,330.0 361.5,328.9 364.5,327.9 367.5,325.6 370.5,324.7 373.5,328.8 376.5,337.6 379.5,339.9 382.5,344.5 385.5,349.0 387.5,354.8 390.5,362.9 393.5,358.4 396.5,352.0 399.5,346.0 402.5,347.3 405.5,337.9 408.5,325.1 411.5,310.4 414.5,297.3 417.5,282.5 420.5,273.3 423.5,266.3 426.5,257.8 429.5,251.3 431.5,245.4 434.5,241.1 437.5,239.9 440.5,235.4 443.5,233.5 446.5,235.6 449.5,241.4 452.5,249.3 455.5,255.4 458.5,261.2 461.5,264.9 464.5,264.3 467.5,264.3 470.5,263.2 473.5,262.7 475.5,260.5 478.5,256.9 481.5,258.0 484.5,257.8 487.5,257.8 490.5,259.1 493.5,261.8 496.5,267.1 499.5,267.1 502.5,267.3 505.5,267.2 508.5,265.1 511.5,260.7 514.5,253.8 517.5,246.6 519.5,238.1 522.5,231.9 525.5,230.5 528.5,229.7 531.5,228.3 534.5,227.4 537.5,226.8 540.5,228.5 543.5,228.5 546.5,230.3 549.5,228.8 552.5,235.1 555.5,241.6 558.5,244.9 561.5,242.6 563.5,237.0 566.5,235.2 569.5,234.5 572.5,229.9 575.5,226.0 578.5,220.8 581.5,216.0 584.5,215.5 587.5,212.0 590.5,204.7 593.5,198.7 596.5,192.2 599.5,187.9 602.5,182.6 605.5,175.5 607.5,173.3 610.5,168.8 613.5,168.0 616.5,167.2 619.5,163.9 622.5,156.7 625.5,152.6 628.5,149.4 631.5,147.8 634.5,144.2 637.5,140.6 640.5,138.5 643.5,137.6 646.5,137.8 649.5,137.9 651.5,138.4 654.5,136.3 657.5,137.1 660.5,143.7 663.5,144.3 666.5,147.5 669.5,149.1 672.5,152.9 675.5,155.7 678.5,161.7 681.5,170.6 684.5,179.6 687.5,175.3 690.5,168.9 693.5,160.0 695.5,156.0 698.5,159.4 701.5,170.1 704.5,182.9 707.5,193.4 710.5,204.0 713.5,216.7 716.5,222.3" fill="none" stroke="#3535a0" stroke-width="1.1"/>
<polyline points="97.5,235.5 100.5,235.3 103.5,235.6 106.5,235.5 109.5,235.2 112.5,234.6 115.5,234.6 118.5,235.8 121.5,240.1 123.5,243.4 126.5,245.2 129.5,246.9 132.5,247.2 135.5,247.0 138.5,247.0 141.5,247.2 144.5,247.3 147.5,247.4 150.5,247.7 153.5,248.3 156.5,249.4 159.5,250.8 162.5,251.9 165.5,252.1 167.5,252.6 170.5,253.6 173.5,254.9 176.5,256.5 179.5,258.7 182.5,260.6 185.5,262.1 188.5,263.0 191.5,263.7 194.5,264.2 197.5,264.8 200.5,265.2 203.5,266.0 206.5,266.8 209.5,267.6 211.5,268.3 214.5,268.7 217.5,268.4 220.5,267.6 223.5,267.4 226.5,267.7 229.5,267.5 232.5,266.7 235.5,265.7 238.5,265.0 241.5,263.9 244.5,262.5 247.5,262.2 250.5,261.9 253.5,261.3 255.5,260.6 258.5,260.1 261.5,259.3 264.5,258.5 267.5,257.3 270.5,255.4 273.5,254.1 276.5,252.1 279.5,250.2 282.5,249.3 285.5,248.9 288.5,248.1 291.5,247.4 294.5,246.6 297.5,246.0 299.5,245.4 302.5,245.0 305.5,244.6 308.5,243.8 311.5,243.9 314.5,244.9 317.5,245.9 320.5,247.0 323.5,248.4 326.5,249.7 329.5,251.6 332.5,254.5 335.5,257.0 338.5,260.6 341.5,263.5 343.5,266.4 346.5,269.2 349.5,271.9 352.5,274.3 355.5,277.1 358.5,278.2 361.5,278.7 364.5,279.3 367.5,279.9 370.5,280.1 373.5,279.1 376.5,276.8 379.5,275.3 382.5,272.3 385.5,269.1 387.5,265.3 390.5,260.8 393.5,257.0 396.5,253.8 399.5,249.6 402.5,245.4 405.5,242.1 408.5,236.8 411.5,232.5 414.5,228.0 417.5,223.4 420.5,221.4 423.5,219.3 426.5,217.4 429.5,216.0 431.5,214.5 434.5,213.3 437.5,212.9 440.5,212.1 443.5,211.6 446.5,212.0 449.5,213.2 452.5,215.3 455.5,216.7 458.5,218.0 461.5,219.4 464.5,220.7 467.5,220.7 470.5,222.3 473.5,223.1 475.5,224.3 478.5,225.4 481.5,224.6 484.5,224.9 487.5,225.0 490.5,224.0 493.5,222.9 496.5,221.2 499.5,220.2 502.5,220.3 505.5,219.9 508.5,218.5 511.5,216.6 514.5,214.3 517.5,212.5 519.5,210.6 522.5,209.0 525.5,207.9 528.5,206.8 531.5,204.9 534.5,203.3 537.5,201.5 540.5,199.6 543.5,198.5 546.5,195.8 549.5,193.3 552.5,190.4 555.5,187.5 558.5,185.6 561.5,183.8 563.5,180.5 566.5,177.4 569.5,173.9 572.5,171.3 575.5,168.7 578.5,165.2 581.5,161.3 584.5,156.7 587.5,152.9 590.5,149.9 593.5,147.6 596.5,144.9 599.5,141.7 602.5,139.6 605.5,136.6 607.5,133.9 610.5,131.2 613.5,128.9 616.5,126.9 619.5,125.0 622.5,123.3 625.5,122.4 628.5,121.4 631.5,121.0 634.5,120.3 637.5,119.4 640.5,118.6 643.5,118.2 646.5,118.6 649.5,118.3 651.5,116.7 654.5,115.4 657.5,113.7 660.5,111.6 663.5,109.5 666.5,107.3 669.5,105.8 672.5,103.5 675.5,101.5 678.5,98.8 681.5,94.8 684.5,89.7 687.5,85.6 690.5,82.4 693.5,80.0 695.5,79.4 698.5,79.9 701.5,81.1 704.5,82.6 707.5,83.7 710.5,85.0 713.5,86.7 716.5,87.5" fill="none" stroke="#3535a0" stroke-width="1" stroke-dasharray="1.5,2"/>
</g>
<g clip-path="url(#c1)">
<line x1="11" y1="368.0" x2="794" y2="368.0" stroke="#555" stroke-width="1.4"/>
<line x1="11" y1="397.7" x2="794" y2="397.7" stroke="#666" stroke-width="1.4" stroke-dasharray="4.5,2,2,2"/>
<line x1="11" y1="427.4" x2="794" y2="427.4" stroke="#555" stroke-width="1.4"/>
<polyline points="153.5,420.3 156.5,419.0 159.5,417.8 162.5,416.7 165.5,415.7 167.5,415.2 170.5,415.4 173.5,416.2 176.5,417.3 179.5,418.6 182.5,420.2 185.5,421.9 188.5,423.5 191.5,424.7 194.5,424.9 197.5,424.3 200.5,423.4 203.5,421.9 206.5,419.6 209.5,416.8 211.5,413.5 214.5,410.0 217.5,406.5 220.5,402.7 223.5,398.7 226.5,395.1 229.5,392.0 232.5,389.6 235.5,387.7 238.5,386.3 241.5,385.5 244.5,385.4 247.5,385.7 250.5,386.2 253.5,386.7 255.5,387.2 258.5,388.3 261.5,389.5 264.5,390.8 267.5,392.2 270.5,393.0 273.5,393.6 276.5,393.6 279.5,393.1 282.5,392.1 285.5,390.9 288.5,389.6 291.5,388.7 294.5,388.2 297.5,387.9 299.5,388.2 302.5,388.9 305.5,389.8 308.5,391.3 311.5,393.2 314.5,395.8 317.5,399.0 320.5,402.9 323.5,406.7 326.5,410.6 329.5,414.4 332.5,418.0 335.5,421.2 338.5,423.6 341.5,425.3 343.5,426.5 346.5,427.9 349.5,429.1 352.5,429.9 355.5,430.5 358.5,430.5 361.5,429.8 364.5,428.9 367.5,427.2 370.5,424.5 373.5,421.1 376.5,417.0 379.5,412.5 382.5,408.0 385.5,403.3 387.5,398.2 390.5,393.0 393.5,387.9 396.5,383.4 399.5,379.7 402.5,376.0 405.5,372.8 408.5,370.3 411.5,368.7 414.5,368.0 417.5,367.7 420.5,367.7 423.5,368.0 426.5,369.0 429.5,370.6 431.5,372.4 434.5,374.2 437.5,376.1 440.5,378.8 443.5,381.7 446.5,385.1 449.5,388.8 452.5,392.7 455.5,397.0 458.5,401.5 461.5,405.9 464.5,409.9 467.5,413.2 470.5,415.9 473.5,418.0 475.5,419.2 478.5,419.4 481.5,418.6 484.5,417.0 487.5,414.8 490.5,411.9 493.5,408.1 496.5,403.7 499.5,399.1 502.5,394.8 505.5,391.1 508.5,387.7 511.5,384.8 514.5,382.6 517.5,381.4 519.5,381.1 522.5,381.5 525.5,381.9 528.5,382.7 531.5,383.9 534.5,385.2 537.5,386.6 540.5,387.2 543.5,387.4 546.5,387.1 549.5,386.5 552.5,385.3 555.5,383.6 558.5,381.5 561.5,379.4 563.5,377.5 566.5,375.5 569.5,373.8 572.5,372.1 575.5,370.7 578.5,369.7 581.5,368.8 584.5,367.9 587.5,367.1 590.5,366.8 593.5,366.8 596.5,366.9 599.5,366.7 602.5,366.6 605.5,366.7 607.5,366.8 610.5,366.8 613.5,366.6 616.5,366.1 619.5,365.7 622.5,365.9 625.5,366.6 628.5,367.4 631.5,368.5 634.5,370.2 637.5,372.5 640.5,374.9 643.5,377.5 646.5,380.2 649.5,382.6 651.5,384.8 654.5,386.8 657.5,388.4 660.5,389.0 663.5,389.2 666.5,388.5 669.5,387.1 672.5,384.9 675.5,382.2 678.5,379.1 681.5,375.7 684.5,372.3 687.5,369.2 690.5,366.7 693.5,364.9 695.5,364.4 698.5,365.3 701.5,367.2 704.5,370.4 707.5,374.7 710.5,379.8 713.5,385.4 716.5,391.4" fill="none" stroke="#f04060" stroke-width="1.1"/>
<polyline points="118.5,428.3 121.5,430.1 123.5,430.5 126.5,429.3 129.5,427.7 132.5,423.5 135.5,420.8 138.5,418.9 141.5,416.3 144.5,412.8 147.5,410.4 150.5,408.0 153.5,406.8 156.5,412.2 159.5,414.7 162.5,415.2 165.5,416.6 167.5,421.2 170.5,426.5 173.5,431.1 176.5,433.6 179.5,433.1 182.5,433.5 185.5,432.2 188.5,429.3 191.5,422.4 194.5,413.8 197.5,407.9 200.5,402.9 203.5,397.4 206.5,391.8 209.5,389.7 211.5,388.5 214.5,388.2 217.5,387.5 220.5,383.0 223.5,381.4 226.5,381.7 229.5,382.4 232.5,382.0 235.5,383.4 238.5,385.2 241.5,387.4 244.5,389.3 247.5,394.3 250.5,394.7 253.5,394.3 255.5,394.8 258.5,396.6 261.5,397.0 264.5,398.7 267.5,400.3 270.5,393.3 273.5,390.3 276.5,385.8 279.5,381.0 282.5,376.4 285.5,378.0 288.5,378.7 291.5,382.3 294.5,388.0 297.5,393.1 299.5,400.4 302.5,408.3 305.5,412.2 308.5,412.0 311.5,415.5 314.5,419.6 317.5,423.1 320.5,426.3 323.5,427.9 326.5,428.9 329.5,432.1 332.5,435.1 335.5,434.0 338.5,432.4 341.5,430.2 343.5,428.0 346.5,430.0 349.5,430.6 352.5,430.3 355.5,430.3 358.5,426.2 361.5,419.8 364.5,416.4 367.5,410.5 370.5,399.9 373.5,389.2 376.5,379.7 379.5,372.2 382.5,369.5 385.5,368.0 387.5,364.8 390.5,361.8 393.5,364.2 396.5,368.7 399.5,370.9 402.5,368.9 405.5,369.0 408.5,366.9 411.5,368.3 414.5,370.1 417.5,368.3 420.5,370.0 423.5,372.7 426.5,377.9 429.5,382.0 431.5,387.9 434.5,391.1 437.5,396.9 440.5,403.4 443.5,406.4 446.5,411.2 449.5,416.8 452.5,420.1 455.5,424.4 458.5,428.8 461.5,430.3 464.5,428.8 467.5,425.9 470.5,423.2 473.5,417.8 475.5,412.3 478.5,405.7 481.5,396.6 484.5,390.8 487.5,387.7 490.5,382.3 493.5,375.6 496.5,371.0 499.5,370.3 502.5,373.7 505.5,377.5 508.5,378.9 511.5,380.1 514.5,383.8 517.5,389.3 519.5,393.8 522.5,395.4 525.5,393.3 528.5,392.9 531.5,390.4 534.5,388.7 537.5,387.4 540.5,382.7 543.5,380.0 546.5,374.5 549.5,372.6 552.5,368.3 555.5,367.0 558.5,366.2 561.5,367.7 563.5,369.1 566.5,367.2 569.5,367.6 572.5,367.4 575.5,369.2 578.5,369.5 581.5,367.6 584.5,363.4 587.5,362.1 590.5,364.1 593.5,367.3 596.5,367.2 599.5,365.7 602.5,367.4 605.5,368.2 607.5,368.7 610.5,368.5 613.5,365.8 616.5,362.8 619.5,362.4 622.5,366.6 625.5,370.6 628.5,375.4 631.5,381.6 634.5,388.7 637.5,395.2 640.5,399.3 643.5,402.2 646.5,403.3 649.5,399.7 651.5,394.2 654.5,389.7 657.5,382.3 660.5,375.3 663.5,372.3 666.5,367.4 669.5,362.8 672.5,359.9 675.5,360.7 678.5,358.7 681.5,358.3 684.5,358.6 687.5,358.9 690.5,362.2 693.5,366.3 695.5,376.4 698.5,386.6 701.5,397.3 704.5,408.3 707.5,419.0 710.5,426.7 713.5,433.2 716.5,436.6" fill="none" stroke="#1f3f80" stroke-width="1.45"/>
</g>
<g clip-path="url(#c2)">
<line x1="11" y1="477.2" x2="794" y2="477.2" stroke="#555" stroke-width="1.4"/>
<line x1="11" y1="506.9" x2="794" y2="506.9" stroke="#666" stroke-width="1.4" stroke-dasharray="4.5,2,2,2"/>
<line x1="11" y1="536.6" x2="794" y2="536.6" stroke="#555" stroke-width="1.4"/>
<polyline points="229.5,529.2 232.5,527.3 235.5,525.4 238.5,523.5 241.5,521.4 244.5,519.3 247.5,517.1 250.5,515.0 253.5,513.0 255.5,511.1 258.5,509.5 261.5,508.0 264.5,506.6 267.5,505.2 270.5,503.9 273.5,502.6 276.5,501.3 279.5,500.1 282.5,499.1 285.5,498.3 288.5,497.5 291.5,496.9 294.5,496.3 297.5,495.8 299.5,495.4 302.5,495.1 305.5,495.1 308.5,495.2 311.5,495.6 314.5,496.3 317.5,497.4 320.5,498.6 323.5,499.9 326.5,501.3 329.5,502.9 332.5,504.7 335.5,506.6 338.5,508.8 341.5,511.2 343.5,513.6 346.5,516.1 349.5,518.6 352.5,520.9 355.5,523.2 358.5,525.3 361.5,527.2 364.5,528.9 367.5,530.4 370.5,531.5 373.5,532.3 376.5,532.5 379.5,532.3 382.5,531.6 385.5,530.5 387.5,529.2 390.5,527.4 393.5,525.4 396.5,523.2 399.5,520.8 402.5,518.3 405.5,515.6 408.5,512.7 411.5,509.6 414.5,506.6 417.5,503.6 420.5,500.7 423.5,498.0 426.5,495.4 429.5,493.2 431.5,491.1 434.5,489.2 437.5,487.6 440.5,486.3 443.5,485.2 446.5,484.6 449.5,484.3 452.5,484.6 455.5,485.2 458.5,486.1 461.5,487.3 464.5,488.6 467.5,490.1 470.5,491.8 473.5,493.6 475.5,495.3 478.5,497.2 481.5,499.0 484.5,500.7 487.5,502.3 490.5,503.7 493.5,504.8 496.5,505.8 499.5,506.5 502.5,507.1 505.5,507.6 508.5,508.0 511.5,508.1 514.5,508.0 517.5,507.7 519.5,507.3 522.5,506.7 525.5,506.0 528.5,505.2 531.5,504.4 534.5,503.4 537.5,502.4 540.5,501.1 543.5,499.8 546.5,498.3 549.5,496.8 552.5,495.4 555.5,493.9 558.5,492.7 561.5,491.5 563.5,490.2 566.5,489.0 569.5,487.7 572.5,486.6 575.5,485.5 578.5,484.4 581.5,483.2 584.5,482.0 587.5,480.9 590.5,479.9 593.5,478.9 596.5,478.0 599.5,477.0 602.5,476.2 605.5,475.6 607.5,475.0 610.5,474.4 613.5,473.9 616.5,473.5 619.5,473.3 622.5,473.2 625.5,473.2 628.5,473.3 631.5,473.5 634.5,473.8 637.5,474.2 640.5,474.5 643.5,475.1 646.5,475.7 649.5,476.4 651.5,477.1 654.5,477.7 657.5,478.3 660.5,478.9 663.5,479.3 666.5,479.7 669.5,480.0 672.5,480.2 675.5,480.4 678.5,480.5 681.5,480.5 684.5,480.2 687.5,479.8 690.5,479.5 693.5,479.3 695.5,479.2 698.5,479.4 701.5,479.8 704.5,480.4 707.5,481.2 710.5,482.3 713.5,483.6 716.5,485.1" fill="none" stroke="#f04060" stroke-width="1.1"/>
<polyline points="170.5,544.3 173.5,545.2 176.5,545.4 179.5,546.4 182.5,547.2 185.5,546.5 188.5,544.4 191.5,541.1 194.5,537.3 197.5,534.5 200.5,531.6 203.5,529.1 206.5,525.7 209.5,522.4 211.5,519.0 214.5,516.1 217.5,512.1 220.5,507.2 223.5,505.1 226.5,505.3 229.5,506.1 232.5,505.9 235.5,505.2 238.5,504.8 241.5,503.7 244.5,501.5 247.5,500.7 250.5,499.9 253.5,498.9 255.5,498.7 258.5,500.5 261.5,500.3 264.5,499.2 267.5,497.1 270.5,494.4 273.5,492.3 276.5,489.2 279.5,486.6 282.5,486.5 285.5,487.7 288.5,489.5 291.5,491.7 294.5,493.3 297.5,494.7 299.5,496.5 302.5,498.5 305.5,500.5 308.5,504.0 311.5,508.0 314.5,514.2 317.5,520.3 320.5,525.9 323.5,527.3 326.5,528.9 329.5,530.4 332.5,532.5 335.5,533.6 338.5,535.3 341.5,535.3 343.5,537.3 346.5,540.5 349.5,541.6 352.5,541.3 355.5,541.4 358.5,538.7 361.5,536.4 364.5,534.3 367.5,531.5 370.5,527.9 373.5,523.8 376.5,518.3 379.5,515.4 382.5,511.4 385.5,505.7 387.5,500.0 390.5,493.9 393.5,489.6 396.5,487.7 399.5,485.6 402.5,482.1 405.5,480.8 408.5,478.3 411.5,478.1 414.5,478.5 417.5,477.3 420.5,478.3 423.5,479.1 426.5,480.8 429.5,483.7 431.5,483.9 434.5,483.9 437.5,485.4 440.5,488.0 443.5,488.8 446.5,492.4 449.5,495.2 452.5,499.0 455.5,503.2 458.5,506.4 461.5,509.6 464.5,510.9 467.5,511.6 470.5,513.6 473.5,515.0 475.5,515.8 478.5,515.9 481.5,515.7 484.5,515.6 487.5,514.9 490.5,512.1 493.5,508.5 496.5,503.2 499.5,500.4 502.5,500.9 505.5,500.5 508.5,499.1 511.5,498.1 514.5,496.9 517.5,497.2 519.5,498.0 522.5,497.3 525.5,495.7 528.5,495.5 531.5,495.1 534.5,495.3 537.5,493.8 540.5,489.8 543.5,487.8 546.5,485.0 549.5,483.6 552.5,481.2 555.5,478.4 558.5,476.2 561.5,475.7 563.5,475.0 566.5,473.6 569.5,473.1 572.5,473.8 575.5,473.9 578.5,474.2 581.5,473.1 584.5,473.1 587.5,472.2 590.5,473.7 593.5,475.2 596.5,475.6 599.5,473.4 602.5,473.3 605.5,473.2 607.5,473.0 610.5,471.6 613.5,470.4 616.5,470.2 619.5,471.2 622.5,473.3 625.5,475.8 628.5,476.6 631.5,477.3 634.5,479.2 637.5,481.7 640.5,482.4 643.5,484.0 646.5,486.5 649.5,487.6 651.5,487.8 654.5,488.3 657.5,487.4 660.5,485.1 663.5,483.3 666.5,481.2 669.5,479.3 672.5,476.2 675.5,474.3 678.5,472.4 681.5,470.4 684.5,467.8 687.5,468.0 690.5,470.0 693.5,472.4 695.5,478.2 698.5,485.2 701.5,490.7 704.5,497.4 707.5,503.2 710.5,509.4 713.5,514.7 716.5,520.1" fill="none" stroke="#1f3f80" stroke-width="1.45"/>
</g>
<g clip-path="url(#c3)">
<line x1="11" y1="586.1" x2="794" y2="586.1" stroke="#555" stroke-width="1.4"/>
<line x1="11" y1="615.8" x2="794" y2="615.8" stroke="#666" stroke-width="1.4" stroke-dasharray="4.5,2,2,2"/>
<line x1="11" y1="645.5" x2="794" y2="645.5" stroke="#555" stroke-width="1.4"/>
<polyline points="352.5,616.8 355.5,617.0 358.5,617.2 361.5,617.4 364.5,617.7 367.5,618.1 370.5,618.6 373.5,619.2 376.5,619.7 379.5,620.3 382.5,620.9 385.5,621.5 387.5,622.0 390.5,622.4 393.5,622.8 396.5,623.2 399.5,623.4 402.5,623.6 405.5,623.7 408.5,623.7 411.5,623.6 414.5,623.4 417.5,623.0 420.5,622.5 423.5,622.0 426.5,621.3 429.5,620.6 431.5,619.8 434.5,618.9 437.5,618.0 440.5,616.9 443.5,615.8 446.5,614.7 449.5,613.6 452.5,612.5 455.5,611.4 458.5,610.3 461.5,609.3 464.5,608.4 467.5,607.4 470.5,606.5 473.5,605.7 475.5,605.0 478.5,604.4 481.5,603.8 484.5,603.3 487.5,602.9 490.5,602.6 493.5,602.3 496.5,602.1 499.5,602.0 502.5,601.9 505.5,601.9 508.5,602.0 511.5,602.2 514.5,602.3 517.5,602.6 519.5,602.9 522.5,603.1 525.5,603.4 528.5,603.6 531.5,603.8 534.5,604.0 537.5,604.1 540.5,604.2 543.5,604.2 546.5,604.1 549.5,604.0 552.5,603.7 555.5,603.4 558.5,603.1 561.5,602.7 563.5,602.2 566.5,601.6 569.5,601.0 572.5,600.4 575.5,599.7 578.5,598.9 581.5,598.1 584.5,597.2 587.5,596.3 590.5,595.5 593.5,594.6 596.5,593.8 599.5,593.0 602.5,592.2 605.5,591.4 607.5,590.6 610.5,589.9 613.5,589.1 616.5,588.5 619.5,587.8 622.5,587.2 625.5,586.6 628.5,586.1 631.5,585.6 634.5,585.2 637.5,584.8 640.5,584.5 643.5,584.2 646.5,584.0 649.5,583.9 651.5,583.7 654.5,583.5 657.5,583.4 660.5,583.2 663.5,583.0 666.5,582.8 669.5,582.8 672.5,582.7 675.5,582.6 678.5,582.6 681.5,582.6 684.5,582.6 687.5,582.7 690.5,582.7 693.5,582.8 695.5,582.8 698.5,583.0 701.5,583.3 704.5,583.6 707.5,584.1 710.5,584.7 713.5,585.4 716.5,586.1" fill="none" stroke="#f04060" stroke-width="1.1"/>
<polyline points="255.5,634.3 258.5,632.6 261.5,630.5 264.5,628.5 267.5,625.9 270.5,622.3 273.5,619.5 276.5,615.9 279.5,612.4 282.5,609.8 285.5,608.6 288.5,607.1 291.5,605.7 294.5,605.0 297.5,604.5 299.5,604.0 302.5,603.9 305.5,603.9 308.5,603.1 311.5,603.8 314.5,605.4 317.5,607.2 320.5,608.9 323.5,610.9 326.5,612.7 329.5,615.3 332.5,618.8 335.5,621.6 338.5,625.4 341.5,628.3 343.5,631.1 346.5,633.4 349.5,635.3 352.5,636.9 355.5,639.0 358.5,639.3 361.5,639.2 364.5,639.2 367.5,639.3 370.5,639.1 373.5,637.7 376.5,635.0 379.5,633.0 382.5,630.2 385.5,627.5 387.5,624.4 390.5,620.7 393.5,618.2 396.5,616.0 399.5,613.0 402.5,610.1 405.5,607.7 408.5,603.3 411.5,600.3 414.5,597.2 417.5,593.8 420.5,592.8 423.5,592.1 426.5,591.3 429.5,591.1 431.5,591.0 434.5,591.3 437.5,592.6 440.5,593.1 443.5,593.7 446.5,595.1 449.5,597.2 452.5,600.1 455.5,601.8 458.5,603.2 461.5,604.9 464.5,606.6 467.5,607.0 470.5,608.9 473.5,609.6 475.5,610.6 478.5,611.4 481.5,610.8 484.5,611.0 487.5,611.1 490.5,610.3 493.5,609.4 496.5,608.3 499.5,607.7 502.5,608.0 505.5,607.8 508.5,606.8 511.5,605.5 514.5,603.7 517.5,602.4 519.5,601.4 522.5,600.5 525.5,600.0 528.5,599.6 531.5,598.2 534.5,597.2 537.5,596.2 540.5,595.0 543.5,594.7 546.5,593.1 549.5,592.3 552.5,591.4 555.5,591.1 558.5,591.4 561.5,591.4 563.5,590.1 566.5,588.9 569.5,587.8 572.5,587.3 575.5,586.7 578.5,585.4 581.5,583.5 584.5,581.8 587.5,580.8 590.5,580.4 593.5,580.8 596.5,580.9 599.5,580.3 602.5,580.8 605.5,580.2 607.5,580.2 610.5,579.5 613.5,579.4 616.5,579.4 619.5,579.3 622.5,579.2 625.5,580.1 628.5,581.0 631.5,582.2 634.5,583.0 637.5,583.8 640.5,584.4 643.5,585.4 646.5,586.6 649.5,586.9 651.5,586.1 654.5,585.5 657.5,584.8 660.5,584.6 663.5,584.4 666.5,584.3 669.5,584.5 672.5,584.4 675.5,584.7 678.5,584.5 681.5,584.0 684.5,582.9 687.5,582.1 690.5,582.0 693.5,582.4 695.5,583.9 698.5,586.3 701.5,589.4 704.5,592.7 707.5,595.7 710.5,599.0 713.5,602.8 716.5,605.9" fill="none" stroke="#1f3f80" stroke-width="1.45"/>
</g>
<line x1="11" y1="20.5" x2="795" y2="20.5" stroke="#1e2a5a" stroke-width="1"/>
<line x1="11.5" y1="20" x2="11.5" y2="334" stroke="#1e2a5a" stroke-width="1"/>
<line x1="12" y1="332.5" x2="794" y2="332.5" stroke="#8c8c94" stroke-width="1"/>
<line x1="11" y1="333.5" x2="795" y2="333.5" stroke="#1e2a5a" stroke-width="1" stroke-dasharray="1.6,1.1"/>
<line x1="794.5" y1="20" x2="794.5" y2="334" stroke="#23306a" stroke-width="1"/>
<line x1="795.5" y1="20" x2="795.5" y2="334" stroke="#b4d8fc" stroke-width="1"/>
<line x1="11" y1="343.5" x2="795" y2="343.5" stroke="#1e2a5a" stroke-width="1" stroke-dasharray="1.6,1.1"/>
<line x1="12" y1="344.5" x2="794" y2="344.5" stroke="#9a9aa4" stroke-width="1"/>
<line x1="11.5" y1="343" x2="11.5" y2="672" stroke="#1e2a5a" stroke-width="1"/>
<line x1="794.5" y1="343" x2="794.5" y2="672" stroke="#23306a" stroke-width="1"/>
<line x1="795.5" y1="343" x2="795.5" y2="672" stroke="#b4d8fc" stroke-width="1"/>
<line x1="11" y1="334.5" x2="796" y2="334.5" stroke="#b4d8fc" stroke-width="1"/>
<line x1="11" y1="672.5" x2="796" y2="672.5" stroke="#b4d8fc" stroke-width="1"/>
<line x1="11" y1="452.5" x2="795" y2="452.5" stroke="#4a5478" stroke-width="1"/>
<line x1="11" y1="561.5" x2="795" y2="561.5" stroke="#4a5478" stroke-width="1"/>
<line x1="12" y1="670.5" x2="794" y2="670.5" stroke="#8c8c94" stroke-width="1"/>
<line x1="11" y1="671.5" x2="795" y2="671.5" stroke="#1e2a5a" stroke-width="1" stroke-dasharray="1.6,1.1"/>
<text x="724.3" y="22.7" font-size="7.2" fill="#8c8c8c" textLength="41.4" lengthAdjust="spacingAndGlyphs">0.0%: 148.79</text>
<text x="722.4" y="72.6" font-size="7.2" fill="#8c8c8c" textLength="43.3" lengthAdjust="spacingAndGlyphs">38.2%: 95.88</text>
<text x="722.4" y="93.9" font-size="7.2" fill="#8c8c8c" textLength="43.3" lengthAdjust="spacingAndGlyphs">50.0%: 79.54</text>
<text x="722.4" y="120.0" font-size="7.2" fill="#8c8c8c" textLength="43.3" lengthAdjust="spacingAndGlyphs">61.8%: 63.20</text>
<text x="718.7" y="326.1" font-size="7.2" fill="#8c8c8c" textLength="47" lengthAdjust="spacingAndGlyphs">100.0%: 10.29</text>
<text x="28.7" y="340.6" font-size="7" font-weight="bold" fill="#1a1a1a" textLength="15.6" lengthAdjust="spacingAndGlyphs">1990</text>
<text x="28.7" y="678.8" font-size="7" font-weight="bold" fill="#1a1a1a" textLength="15.6" lengthAdjust="spacingAndGlyphs">1990</text>
<text x="63.7" y="340.6" font-size="7" font-weight="bold" fill="#1a1a1a" textLength="15.6" lengthAdjust="spacingAndGlyphs">1991</text>
<text x="63.7" y="678.8" font-size="7" font-weight="bold" fill="#1a1a1a" textLength="15.6" lengthAdjust="spacingAndGlyphs">1991</text>
<text x="98.7" y="340.6" font-size="7" font-weight="bold" fill="#1a1a1a" textLength="15.6" lengthAdjust="spacingAndGlyphs">1992</text>
<text x="98.7" y="678.8" font-size="7" font-weight="bold" fill="#1a1a1a" textLength="15.6" lengthAdjust="spacingAndGlyphs">1992</text>
<text x="133.7" y="340.6" font-size="7" font-weight="bold" fill="#1a1a1a" textLength="15.6" lengthAdjust="spacingAndGlyphs">1993</text>
<text x="133.7" y="678.8" font-size="7" font-weight="bold" fill="#1a1a1a" textLength="15.6" lengthAdjust="spacingAndGlyphs">1993</text>
<text x="168.7" y="340.6" font-size="7" font-weight="bold" fill="#1a1a1a" textLength="15.6" lengthAdjust="spacingAndGlyphs">1994</text>
<text x="168.7" y="678.8" font-size="7" font-weight="bold" fill="#1a1a1a" textLength="15.6" lengthAdjust="spacingAndGlyphs">1994</text>
<text x="204.7" y="340.6" font-size="7" font-weight="bold" fill="#1a1a1a" textLength="15.6" lengthAdjust="spacingAndGlyphs">1995</text>
<text x="204.7" y="678.8" font-size="7" font-weight="bold" fill="#1a1a1a" textLength="15.6" lengthAdjust="spacingAndGlyphs">1995</text>
<text x="239.7" y="340.6" font-size="7" font-weight="bold" fill="#1a1a1a" textLength="15.6" lengthAdjust="spacingAndGlyphs">1996</text>
<text x="239.7" y="678.8" font-size="7" font-weight="bold" fill="#1a1a1a" textLength="15.6" lengthAdjust="spacingAndGlyphs">1996</text>
<text x="274.7" y="340.6" font-size="7" font-weight="bold" fill="#1a1a1a" textLength="15.6" lengthAdjust="spacingAndGlyphs">1997</text>
<text x="274.7" y="678.8" font-size="7" font-weight="bold" fill="#1a1a1a" textLength="15.6" lengthAdjust="spacingAndGlyphs">1997</text>
<text x="309.7" y="340.6" font-size="7" font-weight="bold" fill="#1a1a1a" textLength="15.6" lengthAdjust="spacingAndGlyphs">1998</text>
<text x="309.7" y="678.8" font-size="7" font-weight="bold" fill="#1a1a1a" textLength="15.6" lengthAdjust="spacingAndGlyphs">1998</text>
<text x="344.7" y="340.6" font-size="7" font-weight="bold" fill="#1a1a1a" textLength="15.6" lengthAdjust="spacingAndGlyphs">1999</text>
<text x="344.7" y="678.8" font-size="7" font-weight="bold" fill="#1a1a1a" textLength="15.6" lengthAdjust="spacingAndGlyphs">1999</text>
<text x="380.7" y="340.6" font-size="7" font-weight="bold" fill="#1a1a1a" textLength="15.6" lengthAdjust="spacingAndGlyphs">2000</text>
<text x="380.7" y="678.8" font-size="7" font-weight="bold" fill="#1a1a1a" textLength="15.6" lengthAdjust="spacingAndGlyphs">2000</text>
<text x="415.7" y="340.6" font-size="7" font-weight="bold" fill="#1a1a1a" textLength="15.6" lengthAdjust="spacingAndGlyphs">2001</text>
<text x="415.7" y="678.8" font-size="7" font-weight="bold" fill="#1a1a1a" textLength="15.6" lengthAdjust="spacingAndGlyphs">2001</text>
<text x="450.7" y="340.6" font-size="7" font-weight="bold" fill="#1a1a1a" textLength="15.6" lengthAdjust="spacingAndGlyphs">2002</text>
<text x="450.7" y="678.8" font-size="7" font-weight="bold" fill="#1a1a1a" textLength="15.6" lengthAdjust="spacingAndGlyphs">2002</text>
<text x="485.7" y="340.6" font-size="7" font-weight="bold" fill="#1a1a1a" textLength="15.6" lengthAdjust="spacingAndGlyphs">2003</text>
<text x="485.7" y="678.8" font-size="7" font-weight="bold" fill="#1a1a1a" textLength="15.6" lengthAdjust="spacingAndGlyphs">2003</text>
<text x="520.7" y="340.6" font-size="7" font-weight="bold" fill="#1a1a1a" textLength="15.6" lengthAdjust="spacingAndGlyphs">2004</text>
<text x="520.7" y="678.8" font-size="7" font-weight="bold" fill="#1a1a1a" textLength="15.6" lengthAdjust="spacingAndGlyphs">2004</text>
<text x="556.7" y="340.6" font-size="7" font-weight="bold" fill="#1a1a1a" textLength="15.6" lengthAdjust="spacingAndGlyphs">2005</text>
<text x="556.7" y="678.8" font-size="7" font-weight="bold" fill="#1a1a1a" textLength="15.6" lengthAdjust="spacingAndGlyphs">2005</text>
<text x="591.7" y="340.6" font-size="7" font-weight="bold" fill="#1a1a1a" textLength="15.6" lengthAdjust="spacingAndGlyphs">2006</text>
<text x="591.7" y="678.8" font-size="7" font-weight="bold" fill="#1a1a1a" textLength="15.6" lengthAdjust="spacingAndGlyphs">2006</text>
<text x="626.7" y="340.6" font-size="7" font-weight="bold" fill="#1a1a1a" textLength="15.6" lengthAdjust="spacingAndGlyphs">2007</text>
<text x="626.7" y="678.8" font-size="7" font-weight="bold" fill="#1a1a1a" textLength="15.6" lengthAdjust="spacingAndGlyphs">2007</text>
<text x="661.7" y="340.6" font-size="7" font-weight="bold" fill="#1a1a1a" textLength="15.6" lengthAdjust="spacingAndGlyphs">2008</text>
<text x="661.7" y="678.8" font-size="7" font-weight="bold" fill="#1a1a1a" textLength="15.6" lengthAdjust="spacingAndGlyphs">2008</text>
<text x="696.7" y="340.6" font-size="7" font-weight="bold" fill="#1a1a1a" textLength="15.6" lengthAdjust="spacingAndGlyphs">2009</text>
<text x="696.7" y="678.8" font-size="7" font-weight="bold" fill="#1a1a1a" textLength="15.6" lengthAdjust="spacingAndGlyphs">2009</text>
<text x="732.7" y="340.6" font-size="7" font-weight="bold" fill="#1a1a1a" textLength="15.6" lengthAdjust="spacingAndGlyphs">2010</text>
<text x="732.7" y="678.8" font-size="7" font-weight="bold" fill="#1a1a1a" textLength="15.6" lengthAdjust="spacingAndGlyphs">2010</text>
<text x="767.7" y="340.6" font-size="7" font-weight="bold" fill="#1a1a1a" textLength="15.6" lengthAdjust="spacingAndGlyphs">2011</text>
<text x="767.7" y="678.8" font-size="7" font-weight="bold" fill="#1a1a1a" textLength="15.6" lengthAdjust="spacingAndGlyphs">2011</text>
<text x="797.2" y="25.8" font-size="7" font-weight="bold" fill="#1a1a1a" textLength="11" lengthAdjust="spacingAndGlyphs">150</text>
<rect x="794.5" y="23.0" width="1.5" height="1" fill="#111"/>
<text x="797.2" y="33.6" font-size="7" font-weight="bold" fill="#1a1a1a" textLength="11" lengthAdjust="spacingAndGlyphs">140</text>
<rect x="794.5" y="30.8" width="1.5" height="1" fill="#111"/>
<text x="797.2" y="42.1" font-size="7" font-weight="bold" fill="#1a1a1a" textLength="11" lengthAdjust="spacingAndGlyphs">130</text>
<rect x="794.5" y="39.3" width="1.5" height="1" fill="#111"/>
<text x="797.2" y="51.1" font-size="7" font-weight="bold" fill="#1a1a1a" textLength="11" lengthAdjust="spacingAndGlyphs">120</text>
<rect x="794.5" y="48.3" width="1.5" height="1" fill="#111"/>
<text x="797.2" y="56.0" font-size="7" font-weight="bold" fill="#1a1a1a" textLength="11" lengthAdjust="spacingAndGlyphs">115</text>
<rect x="794.5" y="53.2" width="1.5" height="1" fill="#111"/>
<text x="797.2" y="66.3" font-size="7" font-weight="bold" fill="#1a1a1a" textLength="11" lengthAdjust="spacingAndGlyphs">105</text>
<rect x="794.5" y="63.5" width="1.5" height="1" fill="#111"/>
<text x="797.2" y="71.9" font-size="7" font-weight="bold" fill="#1a1a1a" textLength="11" lengthAdjust="spacingAndGlyphs">100</text>
<rect x="794.5" y="69.1" width="1.5" height="1" fill="#111"/>
<text x="797.2" y="77.7" font-size="7" font-weight="bold" fill="#1a1a1a" textLength="7.3" lengthAdjust="spacingAndGlyphs">95</text>
<rect x="794.5" y="74.9" width="1.5" height="1" fill="#111"/>
<text x="797.2" y="83.8" font-size="7" font-weight="bold" fill="#1a1a1a" textLength="7.3" lengthAdjust="spacingAndGlyphs">90</text>
<rect x="794.5" y="81.0" width="1.5" height="1" fill="#111"/>
<text x="797.2" y="90.3" font-size="7" font-weight="bold" fill="#1a1a1a" textLength="7.3" lengthAdjust="spacingAndGlyphs">85</text>
<rect x="794.5" y="87.5" width="1.5" height="1" fill="#111"/>
<text x="797.2" y="97.2" font-size="7" font-weight="bold" fill="#1a1a1a" textLength="7.3" lengthAdjust="spacingAndGlyphs">80</text>
<rect x="794.5" y="94.4" width="1.5" height="1" fill="#111"/>
<text x="797.2" y="104.5" font-size="7" font-weight="bold" fill="#1a1a1a" textLength="7.3" lengthAdjust="spacingAndGlyphs">75</text>
<rect x="794.5" y="101.7" width="1.5" height="1" fill="#111"/>
<text x="797.2" y="112.4" font-size="7" font-weight="bold" fill="#1a1a1a" textLength="7.3" lengthAdjust="spacingAndGlyphs">70</text>
<rect x="794.5" y="109.6" width="1.5" height="1" fill="#111"/>
<text x="797.2" y="120.8" font-size="7" font-weight="bold" fill="#1a1a1a" textLength="7.3" lengthAdjust="spacingAndGlyphs">65</text>
<rect x="794.5" y="118.0" width="1.5" height="1" fill="#111"/>
<text x="797.2" y="129.9" font-size="7" font-weight="bold" fill="#1a1a1a" textLength="7.3" lengthAdjust="spacingAndGlyphs">60</text>
<rect x="794.5" y="127.1" width="1.5" height="1" fill="#111"/>
<text x="797.2" y="139.8" font-size="7" font-weight="bold" fill="#1a1a1a" textLength="7.3" lengthAdjust="spacingAndGlyphs">55</text>
<rect x="794.5" y="137.0" width="1.5" height="1" fill="#111"/>
<text x="797.2" y="150.6" font-size="7" font-weight="bold" fill="#1a1a1a" textLength="7.3" lengthAdjust="spacingAndGlyphs">50</text>
<rect x="794.5" y="147.8" width="1.5" height="1" fill="#111"/>
<text x="797.2" y="162.5" font-size="7" font-weight="bold" fill="#1a1a1a" textLength="7.3" lengthAdjust="spacingAndGlyphs">45</text>
<rect x="794.5" y="159.7" width="1.5" height="1" fill="#111"/>
<text x="797.2" y="175.9" font-size="7" font-weight="bold" fill="#1a1a1a" textLength="7.3" lengthAdjust="spacingAndGlyphs">40</text>
<rect x="794.5" y="173.1" width="1.5" height="1" fill="#111"/>
<text x="797.2" y="191.1" font-size="7" font-weight="bold" fill="#1a1a1a" textLength="7.3" lengthAdjust="spacingAndGlyphs">35</text>
<rect x="794.5" y="188.3" width="1.5" height="1" fill="#111"/>
<text x="797.2" y="208.6" font-size="7" font-weight="bold" fill="#1a1a1a" textLength="7.3" lengthAdjust="spacingAndGlyphs">30</text>
<rect x="794.5" y="205.8" width="1.5" height="1" fill="#111"/>
<text x="797.2" y="229.3" font-size="7" font-weight="bold" fill="#1a1a1a" textLength="7.3" lengthAdjust="spacingAndGlyphs">25</text>
<rect x="794.5" y="226.5" width="1.5" height="1" fill="#111"/>
<text x="797.2" y="254.7" font-size="7" font-weight="bold" fill="#1a1a1a" textLength="7.3" lengthAdjust="spacingAndGlyphs">20</text>
<rect x="794.5" y="251.9" width="1.5" height="1" fill="#111"/>
<text x="797.2" y="287.3" font-size="7" font-weight="bold" fill="#1a1a1a" textLength="7.3" lengthAdjust="spacingAndGlyphs">15</text>
<rect x="794.5" y="284.5" width="1.5" height="1" fill="#111"/>
<text x="796.8" y="370.3" font-size="7" font-weight="bold" fill="#1a1a1a" textLength="7.3" lengthAdjust="spacingAndGlyphs">80</text>
<text x="796.8" y="400.0" font-size="7" font-weight="bold" fill="#1a1a1a" textLength="7.3" lengthAdjust="spacingAndGlyphs">50</text>
<text x="796.8" y="429.7" font-size="7" font-weight="bold" fill="#1a1a1a" textLength="7.3" lengthAdjust="spacingAndGlyphs">20</text>
<rect x="794.5" y="446.7" width="1.5" height="1" fill="#111"/>
<rect x="794.5" y="436.8" width="1.5" height="1" fill="#111"/>
<rect x="794.5" y="426.9" width="1.5" height="1" fill="#111"/>
<rect x="794.5" y="417.0" width="1.5" height="1" fill="#111"/>
<rect x="794.5" y="407.1" width="1.5" height="1" fill="#111"/>
<rect x="794.5" y="397.2" width="1.5" height="1" fill="#111"/>
<rect x="794.5" y="387.3" width="1.5" height="1" fill="#111"/>
<rect x="794.5" y="377.4" width="1.5" height="1" fill="#111"/>
<rect x="794.5" y="367.5" width="1.5" height="1" fill="#111"/>
<rect x="794.5" y="357.6" width="1.5" height="1" fill="#111"/>
<rect x="794.5" y="347.7" width="1.5" height="1" fill="#111"/>
<text x="796.8" y="479.5" font-size="7" font-weight="bold" fill="#1a1a1a" textLength="7.3" lengthAdjust="spacingAndGlyphs">80</text>
<text x="796.8" y="509.2" font-size="7" font-weight="bold" fill="#1a1a1a" textLength="7.3" lengthAdjust="spacingAndGlyphs">50</text>
<text x="796.8" y="538.9" font-size="7" font-weight="bold" fill="#1a1a1a" textLength="7.3" lengthAdjust="spacingAndGlyphs">20</text>
<rect x="794.5" y="555.9" width="1.5" height="1" fill="#111"/>
<rect x="794.5" y="546.0" width="1.5" height="1" fill="#111"/>
<rect x="794.5" y="536.1" width="1.5" height="1" fill="#111"/>
<rect x="794.5" y="526.2" width="1.5" height="1" fill="#111"/>
<rect x="794.5" y="516.3" width="1.5" height="1" fill="#111"/>
<rect x="794.5" y="506.4" width="1.5" height="1" fill="#111"/>
<rect x="794.5" y="496.5" width="1.5" height="1" fill="#111"/>
<rect x="794.5" y="486.6" width="1.5" height="1" fill="#111"/>
<rect x="794.5" y="476.7" width="1.5" height="1" fill="#111"/>
<rect x="794.5" y="466.8" width="1.5" height="1" fill="#111"/>
<rect x="794.5" y="456.9" width="1.5" height="1" fill="#111"/>
<text x="796.8" y="588.4" font-size="7" font-weight="bold" fill="#1a1a1a" textLength="7.3" lengthAdjust="spacingAndGlyphs">80</text>
<text x="796.8" y="618.1" font-size="7" font-weight="bold" fill="#1a1a1a" textLength="7.3" lengthAdjust="spacingAndGlyphs">50</text>
<text x="796.8" y="647.8" font-size="7" font-weight="bold" fill="#1a1a1a" textLength="7.3" lengthAdjust="spacingAndGlyphs">20</text>
<rect x="794.5" y="664.8" width="1.5" height="1" fill="#111"/>
<rect x="794.5" y="654.9" width="1.5" height="1" fill="#111"/>
<rect x="794.5" y="645.0" width="1.5" height="1" fill="#111"/>
<rect x="794.5" y="635.1" width="1.5" height="1" fill="#111"/>
<rect x="794.5" y="625.2" width="1.5" height="1" fill="#111"/>
<rect x="794.5" y="615.3" width="1.5" height="1" fill="#111"/>
<rect x="794.5" y="605.4" width="1.5" height="1" fill="#111"/>
<rect x="794.5" y="595.5" width="1.5" height="1" fill="#111"/>
<rect x="794.5" y="585.6" width="1.5" height="1" fill="#111"/>
<rect x="794.5" y="575.7" width="1.5" height="1" fill="#111"/>
<rect x="794.5" y="565.8" width="1.5" height="1" fill="#111"/>
<text x="11.4" y="10.5" font-size="9.2" font-weight="bold" fill="#000" textLength="27.8" lengthAdjust="spacingAndGlyphs">$WTIC</text>
<line x1="14.2" y1="3" x2="14.2" y2="11.6" stroke="#000" stroke-width="0.9"/>
<text x="41.4" y="10.1" font-size="8.3" fill="#000" textLength="153.2" lengthAdjust="spacingAndGlyphs">(Oil - Light Crude - Continuous Contract (EOD))</text>
<text x="199" y="9.4" font-size="6.5" font-weight="bold" fill="#222" textLength="15.5" lengthAdjust="spacingAndGlyphs">INDX</text>
<text x="11.4" y="18.7" font-size="7.6" fill="#111" textLength="41.3" lengthAdjust="spacingAndGlyphs" stroke="#111" stroke-width="0.15">22-May-2009</text>
<text x="732.6" y="10.2" font-size="8" fill="#585858" textLength="61.4" lengthAdjust="spacingAndGlyphs">©StockCharts.com</text>
<text x="540" y="18.7" font-size="8" font-weight="bold" fill="#000" textLength="20" lengthAdjust="spacingAndGlyphs">Open</text>
<text x="561.5" y="18.7" font-size="8" fill="#000" textLength="18" lengthAdjust="spacingAndGlyphs">50.95</text>
<text x="583.6" y="18.7" font-size="8" font-weight="bold" fill="#000" textLength="18" lengthAdjust="spacingAndGlyphs">High</text>
<text x="602.5" y="18.7" font-size="8" fill="#000" textLength="18" lengthAdjust="spacingAndGlyphs">62.26</text>
<text x="624.8" y="18.7" font-size="8" font-weight="bold" fill="#000" textLength="16" lengthAdjust="spacingAndGlyphs">Low</text>
<text x="643.3" y="18.7" font-size="8" fill="#000" textLength="18" lengthAdjust="spacingAndGlyphs">50.43</text>
<text x="666" y="18.7" font-size="8" font-weight="bold" fill="#000" textLength="22.3" lengthAdjust="spacingAndGlyphs">Close</text>
<text x="690" y="18.7" font-size="8" fill="#000" textLength="17.8" lengthAdjust="spacingAndGlyphs">61.67</text>
<text x="713" y="18.7" font-size="8" font-weight="bold" fill="#000" textLength="16" lengthAdjust="spacingAndGlyphs">Chg</text>
<text x="730.8" y="18.7" font-size="8" fill="#000" textLength="56.4" lengthAdjust="spacingAndGlyphs">+10.55 (+20.64%)</text>
<path d="M789.5,18 L794.5,18 L792,14.5 Z" fill="#555"/>
<rect x="12" y="20.7" width="99.7" height="7.8" fill="#fff"/>
<rect x="12" y="28.4" width="107.0" height="7.8" fill="#fff"/>
<rect x="12" y="36.1" width="107.0" height="7.8" fill="#fff"/>
<rect x="12" y="43.7" width="107.0" height="7.8" fill="#fff"/>
<rect x="12" y="50.1" width="51.0" height="7.8" fill="#fff"/>
<text x="21.7" y="27.1" font-size="7.5" fill="#222" textLength="89.0" lengthAdjust="spacingAndGlyphs" stroke="#222" stroke-width="0.08">$WTIC (Monthly) 61.67</text>
<text x="20.2" y="34.8" font-size="7.5" fill="#2a2a90" textLength="97.8" lengthAdjust="spacingAndGlyphs" stroke="#2a2a90" stroke-width="0.08">BB(21,2.0) 26.06 - 85.37 - 144.68</text>
<line x1="13" y1="32.3" x2="19.5" y2="32.3" stroke="#2a2a90" stroke-width="1.5"/>
<text x="20.2" y="42.5" font-size="7.5" fill="#ee2020" textLength="97.8" lengthAdjust="spacingAndGlyphs" stroke="#ee2020" stroke-width="0.08">BB(34,2.1) 24.45 - 77.86 - 131.27</text>
<line x1="13" y1="40.0" x2="19.5" y2="40.0" stroke="#ee2020" stroke-width="1.5"/>
<text x="20.2" y="50.1" font-size="7.5" fill="#1f6a1f" textLength="97.8" lengthAdjust="spacingAndGlyphs" stroke="#1f6a1f" stroke-width="0.08">BB(55,2.5) 15.09 - 71.17 - 127.26</text>
<line x1="13" y1="47.6" x2="19.5" y2="47.6" stroke="#1f6a1f" stroke-width="1.5"/>
<text x="20.2" y="56.5" font-size="7.5" fill="#2a4a8a" textLength="41.8" lengthAdjust="spacingAndGlyphs" stroke="#2a4a8a" stroke-width="0.08">Volume undef</text>
<path d="M13.2,22.3 L15,22.3 L15.8,24.3 L17.2,24.3 L18,22.3 L19.7,22.3 L19.2,25.2 L18.6,27 L15.6,26.9 L13.8,25.6 Z" fill="#555"/>
<ellipse cx="16.6" cy="25.4" rx="1.9" ry="1.4" fill="#000"/>
<g fill="#2c4c9c"><rect x="13.2" y="53" width="1.7" height="3.8"/><rect x="15.1" y="51" width="1.7" height="5.8"/><rect x="17.1" y="53" width="1.8" height="3.8"/></g>
<rect x="12" y="344" width="164.2" height="8.5" fill="#fff"/>
<line x1="13" y1="348.3" x2="19.5" y2="348.3" stroke="#1f3f80" stroke-width="1.5"/>
<text x="21.4" y="350.4" font-size="7.5" fill="#222" textLength="101.6" lengthAdjust="spacingAndGlyphs" stroke="#222" stroke-width="0.08">Full STO %K(21,8) %D(13)</text>
<text x="126.9" y="350.4" font-size="7.5" fill="#2a4a90" textLength="24.1" lengthAdjust="spacingAndGlyphs" stroke="#2a4a90" stroke-width="0.08">11.42,</text>
<text x="153.8" y="350.4" font-size="7.5" fill="#ee3040" textLength="21.4" lengthAdjust="spacingAndGlyphs" stroke="#ee3040" stroke-width="0.08">56.56</text>
<rect x="12" y="453" width="169.1" height="8.5" fill="#fff"/>
<line x1="13" y1="457.3" x2="19.5" y2="457.3" stroke="#1f3f80" stroke-width="1.5"/>
<text x="21.4" y="459.4" font-size="7.5" fill="#222" textLength="107.1" lengthAdjust="spacingAndGlyphs" stroke="#222" stroke-width="0.08">Full STO %K(34,13) %D(21)</text>
<text x="131.4" y="459.4" font-size="7.5" fill="#2a4a90" textLength="24.6" lengthAdjust="spacingAndGlyphs" stroke="#2a4a90" stroke-width="0.08">36.68,</text>
<text x="158.8" y="459.4" font-size="7.5" fill="#ee3040" textLength="21.3" lengthAdjust="spacingAndGlyphs" stroke="#ee3040" stroke-width="0.08">72.32</text>
<rect x="12" y="562" width="169.1" height="8.5" fill="#fff"/>
<line x1="13" y1="566.3" x2="19.5" y2="566.3" stroke="#1f3f80" stroke-width="1.5"/>
<text x="21.4" y="568.4" font-size="7.5" fill="#222" textLength="107.1" lengthAdjust="spacingAndGlyphs" stroke="#222" stroke-width="0.08">Full STO %K(55,21) %D(34)</text>
<text x="131.4" y="568.4" font-size="7.5" fill="#2a4a90" textLength="24.6" lengthAdjust="spacingAndGlyphs" stroke="#2a4a90" stroke-width="0.08">60.28,</text>
<text x="158.8" y="568.4" font-size="7.5" fill="#ee3040" textLength="21.3" lengthAdjust="spacingAndGlyphs" stroke="#ee3040" stroke-width="0.08">80.27</text>
</svg></body></html>
